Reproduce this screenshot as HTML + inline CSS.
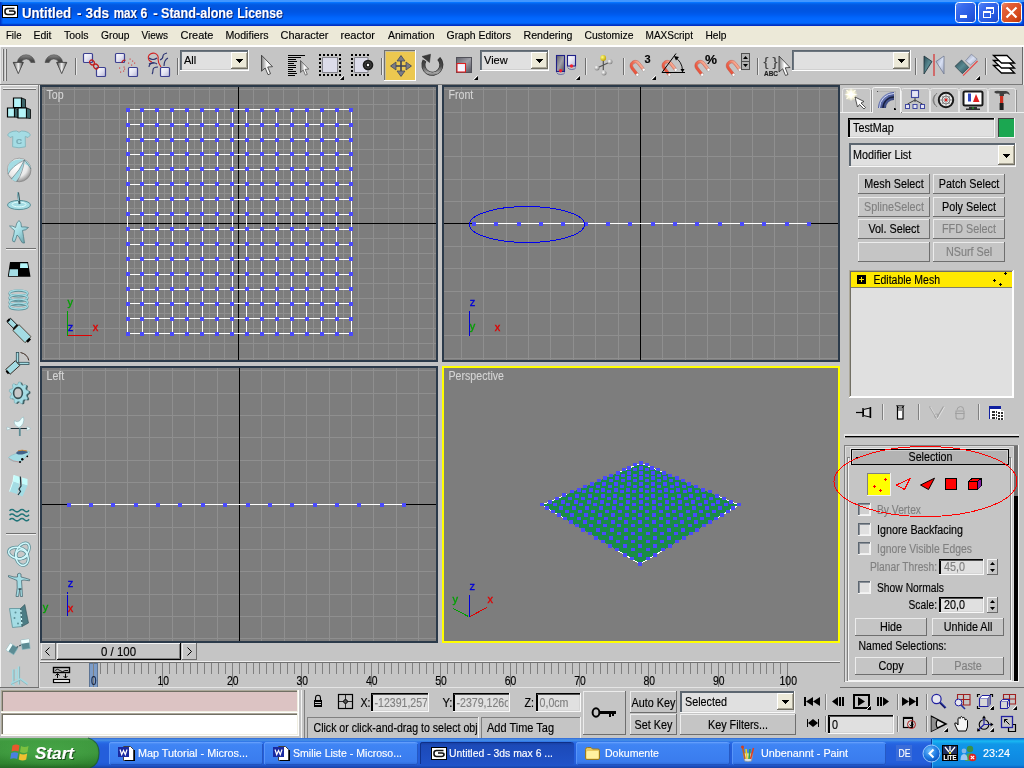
<!DOCTYPE html>
<html><head><meta charset="utf-8"><title>Untitled - 3ds max 6</title>
<style>
html,body{margin:0;padding:0}
body{width:1024px;height:768px;position:relative;overflow:hidden;background:#c5c5c5;font-family:"Liberation Sans",sans-serif;font-size:11px;color:#000}
.a{position:absolute}
.t{position:absolute;white-space:nowrap;line-height:1}
svg{position:absolute;overflow:visible;will-change:transform}
</style></head><body>

<div class="a" id="titlebar" style="left:0;top:0;width:1024px;height:26px;background:linear-gradient(to bottom,#4196ff 0,#4196ff 1.6px,#0574ff 2.5px,#0465ee 3.5px,#0258e0 5px,#0054e0 9px,#0056e4 12px,#005cf0 15px,#0064fa 17px,#0368ff 19px,#0368ff 22.5px,#0060f0 23.5px,#0042d0 24.5px,#002fc5 25.5px)"></div><div class="a" id="menubar" style="left:0;top:26px;width:1024px;height:19px;background:#ece9d8"></div><div class="a" style="left:0;top:45px;width:1024px;height:2px;background:#ffffff"></div><svg class="a" style="left:0;top:0" width="1024" height="768" viewBox="0 0 1024 768" font-family="Liberation Sans" ><defs>
<linearGradient id="gbtn" x1="0" y1="0" x2="1" y2="1"><stop offset="0" stop-color="#5a8cf8"/><stop offset="0.25" stop-color="#3a6cee"/><stop offset="0.7" stop-color="#2458e0"/><stop offset="1" stop-color="#1c46c8"/></linearGradient>
<linearGradient id="gclose" x1="0" y1="0" x2="1" y2="1"><stop offset="0" stop-color="#ee9070"/><stop offset="0.25" stop-color="#e2603a"/><stop offset="0.7" stop-color="#d64a1c"/><stop offset="1" stop-color="#b83208"/></linearGradient>
<linearGradient id="gleft" x1="0" y1="0" x2="1" y2="0"><stop offset="0" stop-color="#0030c0"/><stop offset="1" stop-color="#0030c0" stop-opacity="0"/></linearGradient>
</defs><rect x="0" y="2" width="3" height="24" fill="url(#gleft)" /><rect x="1021" y="2" width="3" height="24" fill="url(#gleft)" transform="translate(2045,0) scale(-1,1)"/><rect x="2" y="5" width="16" height="13" fill="#000" shape-rendering="crispEdges"/><rect x="3" y="6" width="14" height="11" fill="#fff" shape-rendering="crispEdges"/><path d="M14.5 8.5 H7.5 Q5 8.5 5 11 V12 Q5 14.5 7.5 14.5 H12.5 Q15 14.5 15 12.5 Q15 11 13 11 H9" fill="none" stroke="#111" stroke-width="1.6"/><text x="23" y="19" font-size="14" fill="#0a1e6e" stroke="#0a1e6e" stroke-width="0.15" font-weight="bold" textLength="49.2" lengthAdjust="spacingAndGlyphs" >Untitled</text><text x="78" y="19" font-size="14" fill="#0a1e6e" stroke="#0a1e6e" stroke-width="0.15" font-weight="bold" textLength="4.5" lengthAdjust="spacingAndGlyphs" >-</text><text x="86.6" y="19" font-size="14" fill="#0a1e6e" stroke="#0a1e6e" stroke-width="0.15" font-weight="bold" textLength="23.4" lengthAdjust="spacingAndGlyphs" >3ds</text><text x="114.7" y="19" font-size="14" fill="#0a1e6e" stroke="#0a1e6e" stroke-width="0.15" font-weight="bold" textLength="23.3" lengthAdjust="spacingAndGlyphs" >max</text><text x="141.6" y="19" font-size="14" fill="#0a1e6e" stroke="#0a1e6e" stroke-width="0.15" font-weight="bold" textLength="6.8" lengthAdjust="spacingAndGlyphs" >6</text><text x="154.2" y="19" font-size="14" fill="#0a1e6e" stroke="#0a1e6e" stroke-width="0.15" font-weight="bold" textLength="4.5" lengthAdjust="spacingAndGlyphs" >-</text><text x="162" y="19" font-size="14" fill="#0a1e6e" stroke="#0a1e6e" stroke-width="0.15" font-weight="bold" textLength="72" lengthAdjust="spacingAndGlyphs" >Stand-alone</text><text x="238.3" y="19" font-size="14" fill="#0a1e6e" stroke="#0a1e6e" stroke-width="0.15" font-weight="bold" textLength="45.4" lengthAdjust="spacingAndGlyphs" >License</text><text x="22" y="18" font-size="14" fill="#fff" stroke="#fff" stroke-width="0.15" font-weight="bold" textLength="49.2" lengthAdjust="spacingAndGlyphs" >Untitled</text><text x="77" y="18" font-size="14" fill="#fff" stroke="#fff" stroke-width="0.15" font-weight="bold" textLength="4.5" lengthAdjust="spacingAndGlyphs" >-</text><text x="85.6" y="18" font-size="14" fill="#fff" stroke="#fff" stroke-width="0.15" font-weight="bold" textLength="23.4" lengthAdjust="spacingAndGlyphs" >3ds</text><text x="113.7" y="18" font-size="14" fill="#fff" stroke="#fff" stroke-width="0.15" font-weight="bold" textLength="23.3" lengthAdjust="spacingAndGlyphs" >max</text><text x="140.6" y="18" font-size="14" fill="#fff" stroke="#fff" stroke-width="0.15" font-weight="bold" textLength="6.8" lengthAdjust="spacingAndGlyphs" >6</text><text x="153.2" y="18" font-size="14" fill="#fff" stroke="#fff" stroke-width="0.15" font-weight="bold" textLength="4.5" lengthAdjust="spacingAndGlyphs" >-</text><text x="161" y="18" font-size="14" fill="#fff" stroke="#fff" stroke-width="0.15" font-weight="bold" textLength="72" lengthAdjust="spacingAndGlyphs" >Stand-alone</text><text x="237.3" y="18" font-size="14" fill="#fff" stroke="#fff" stroke-width="0.15" font-weight="bold" textLength="45.4" lengthAdjust="spacingAndGlyphs" >License</text><rect x="955.5" y="2.5" width="20" height="20" rx="3" ry="3" fill="url(#gbtn)" stroke="#ffffff" stroke-width="1"/><rect x="960" y="15" width="7" height="3" fill="#fff" shape-rendering="crispEdges"/><rect x="978.5" y="2.5" width="20" height="20" rx="3" ry="3" fill="url(#gbtn)" stroke="#ffffff" stroke-width="1"/><path d="M986.5 9.5 V7.5 H993.5 V13.5 H991.5" fill="none" stroke="#fff" stroke-width="1"/><rect x="986" y="7" width="8" height="2" fill="#fff" shape-rendering="crispEdges"/><rect x="983.5" y="11.5" width="7" height="6" fill="none" stroke="#fff" stroke-width="1"/><rect x="983" y="11" width="8" height="2" fill="#fff" shape-rendering="crispEdges"/><rect x="1001.5" y="2.5" width="20" height="20" rx="3" ry="3" fill="url(#gclose)" stroke="#ffffff" stroke-width="1"/><path d="M1006.5 7.5 L1016.5 17.5 M1016.5 7.5 L1006.5 17.5" stroke="#fff" stroke-width="2.2" stroke-linecap="butt" fill="none"/><text x="6" y="39" font-size="11" fill="#000" stroke="#000" stroke-width="0.15" textLength="15.5" lengthAdjust="spacingAndGlyphs" >File</text><text x="33.5" y="39" font-size="11" fill="#000" stroke="#000" stroke-width="0.15" textLength="18.0" lengthAdjust="spacingAndGlyphs" >Edit</text><text x="64" y="39" font-size="11" fill="#000" stroke="#000" stroke-width="0.15" textLength="24.5" lengthAdjust="spacingAndGlyphs" >Tools</text><text x="101" y="39" font-size="11" fill="#000" stroke="#000" stroke-width="0.15" textLength="28.5" lengthAdjust="spacingAndGlyphs" >Group</text><text x="141.5" y="39" font-size="11" fill="#000" stroke="#000" stroke-width="0.15" textLength="26.5" lengthAdjust="spacingAndGlyphs" >Views</text><text x="180.5" y="39" font-size="11" fill="#000" stroke="#000" stroke-width="0.15" textLength="33.0" lengthAdjust="spacingAndGlyphs" >Create</text><text x="225.5" y="39" font-size="11" fill="#000" stroke="#000" stroke-width="0.15" textLength="43.0" lengthAdjust="spacingAndGlyphs" >Modifiers</text><text x="280.5" y="39" font-size="11" fill="#000" stroke="#000" stroke-width="0.15" textLength="48.0" lengthAdjust="spacingAndGlyphs" >Character</text><text x="340.5" y="39" font-size="11" fill="#000" stroke="#000" stroke-width="0.15" textLength="34.5" lengthAdjust="spacingAndGlyphs" >reactor</text><text x="388" y="39" font-size="11" fill="#000" stroke="#000" stroke-width="0.15" textLength="46.5" lengthAdjust="spacingAndGlyphs" >Animation</text><text x="446.5" y="39" font-size="11" fill="#000" stroke="#000" stroke-width="0.15" textLength="64.5" lengthAdjust="spacingAndGlyphs" >Graph Editors</text><text x="523.5" y="39" font-size="11" fill="#000" stroke="#000" stroke-width="0.15" textLength="49.0" lengthAdjust="spacingAndGlyphs" >Rendering</text><text x="584.5" y="39" font-size="11" fill="#000" stroke="#000" stroke-width="0.15" textLength="49.0" lengthAdjust="spacingAndGlyphs" >Customize</text><text x="645.5" y="39" font-size="11" fill="#000" stroke="#000" stroke-width="0.15" textLength="47.5" lengthAdjust="spacingAndGlyphs" >MAXScript</text><text x="705.5" y="39" font-size="11" fill="#000" stroke="#000" stroke-width="0.15" textLength="21.0" lengthAdjust="spacingAndGlyphs" >Help</text></svg>
<svg class="a" style="left:0;top:0" width="1024" height="768" viewBox="0 0 1024 768" font-family="Liberation Sans" ><defs>
<linearGradient id="gbox" x1="0" y1="0" x2="1" y2="1"><stop offset="0" stop-color="#ffffff"/><stop offset="0.5" stop-color="#e4e4f2"/><stop offset="1" stop-color="#b4b4d4"/></linearGradient>
<linearGradient id="gmag" x1="0" y1="0" x2="1" y2="0"><stop offset="0" stop-color="#e85038"/><stop offset="0.55" stop-color="#f07058"/><stop offset="1" stop-color="#f8b8a0"/></linearGradient>
<linearGradient id="gcur" x1="0" y1="0" x2="1" y2="0"><stop offset="0" stop-color="#808080"/><stop offset="0.5" stop-color="#ffffff"/><stop offset="1" stop-color="#e0e0e0"/></linearGradient>
<linearGradient id="garr" x1="0" y1="0" x2="0" y2="1"><stop offset="0" stop-color="#8a8a8a"/><stop offset="0.3" stop-color="#4a4a4a"/><stop offset="1" stop-color="#303030"/></linearGradient>
<linearGradient id="gahead" x1="0" y1="0" x2="1" y2="0"><stop offset="0" stop-color="#606060"/><stop offset="0.5" stop-color="#f0f0f0"/><stop offset="1" stop-color="#404040"/></linearGradient>
<linearGradient id="gteal" x1="0" y1="0" x2="1" y2="1"><stop offset="0" stop-color="#2a4a55"/><stop offset="0.5" stop-color="#5a8a92"/><stop offset="1" stop-color="#2a4a55"/></linearGradient>
<linearGradient id="glav" x1="0" y1="0" x2="1" y2="1"><stop offset="0" stop-color="#8890a8"/><stop offset="0.5" stop-color="#d8e0f4"/><stop offset="1" stop-color="#a0a8c0"/></linearGradient>
<linearGradient id="gdk" x1="0" y1="0" x2="1" y2="1"><stop offset="0" stop-color="#60606a"/><stop offset="0.5" stop-color="#a0a0a8"/><stop offset="1" stop-color="#50505a"/></linearGradient>
<linearGradient id="grot" gradientUnits="userSpaceOnUse" x1="432" y1="54" x2="432" y2="76"><stop offset="0" stop-color="#303030"/><stop offset="0.55" stop-color="#484848"/><stop offset="0.85" stop-color="#a8a8a8"/><stop offset="1" stop-color="#606060"/></linearGradient><radialGradient id="gball" cx="0.35" cy="0.35" r="0.7"><stop offset="0" stop-color="#ffffff"/><stop offset="1" stop-color="#808080"/></radialGradient>
<radialGradient id="gyball" cx="0.35" cy="0.35" r="0.7"><stop offset="0" stop-color="#ffff80"/><stop offset="1" stop-color="#c0a000"/></radialGradient>
</defs><rect x="0" y="47" width="1" height="38" fill="#e8e8e8" shape-rendering="crispEdges"/><rect x="1022" y="47" width="1" height="38" fill="#6a6a6a" shape-rendering="crispEdges"/><rect x="1023" y="47" width="1" height="38" fill="#e8e8e8" shape-rendering="crispEdges"/><rect x="0" y="84" width="1023" height="1" fill="#7a7a7a" shape-rendering="crispEdges"/><rect x="3" y="49" width="1" height="32" fill="#6e6e6e" shape-rendering="crispEdges"/><rect x="6" y="49" width="1" height="32" fill="#6e6e6e" shape-rendering="crispEdges"/><rect x="2" y="49" width="1" height="32" fill="#e0e0e0" shape-rendering="crispEdges"/><rect x="5" y="49" width="1" height="32" fill="#e0e0e0" shape-rendering="crispEdges"/><path d="M35 62.5 A9 9 0 0 0 17.2 62.3 L13.2 62.3 L18.3 73.6 L23.4 62.3 L21.6 62.3 A4.8 4.8 0 0 1 30.8 62.5 Z" fill="url(#garr)" stroke="#404040" stroke-width="0.5"/><path d="M13.4 62.5 L18.3 73.4 L23.2 62.5 Z" fill="url(#gahead)" stroke="#383838" stroke-width="0.6"/><g transform="translate(80,0) scale(-1,1)"><path d="M35 62.5 A9 9 0 0 0 17.2 62.3 L13.2 62.3 L18.3 73.6 L23.4 62.3 L21.6 62.3 A4.8 4.8 0 0 1 30.8 62.5 Z" fill="url(#garr)" stroke="#404040" stroke-width="0.5"/><path d="M13.4 62.5 L18.3 73.4 L23.2 62.5 Z" fill="url(#gahead)" stroke="#383838" stroke-width="0.6"/></g><rect x="75" y="58" width="1" height="17" fill="#6e6e6e" shape-rendering="crispEdges"/><rect x="76" y="58" width="1" height="17" fill="#e8e8e8" shape-rendering="crispEdges"/><rect x="83.5" y="53.5" width="9" height="9" rx="1" fill="url(#gbox)" stroke="#3c4090" stroke-width="1.2"/><rect x="96.5" y="67.5" width="9" height="9" rx="1" fill="url(#gbox)" stroke="#3c4090" stroke-width="1.2"/><ellipse cx="92" cy="62.5" rx="2.6" ry="2.1" transform="rotate(45 92 62.5)" fill="none" stroke="#c02020" stroke-width="1.2"/><ellipse cx="96" cy="66.5" rx="2.6" ry="2.1" transform="rotate(45 96 66.5)" fill="none" stroke="#c02020" stroke-width="1.2"/><rect x="115.5" y="53.5" width="9" height="9" rx="1" fill="url(#gbox)" stroke="#3c4090" stroke-width="1.2"/><rect x="128.5" y="67.5" width="9" height="9" rx="1" fill="url(#gbox)" stroke="#3c4090" stroke-width="1.2"/><path d="M122 63 A2.4 2.4 0 0 1 125.5 60.5" fill="none" stroke="#c02020" stroke-width="1.3"/><rect x="129.5" y="58.5" width="1.2" height="1.2" fill="#d05050" /><rect x="132" y="60.5" width="1.2" height="1.2" fill="#d05050" /><rect x="128" y="62.5" width="1.2" height="1.2" fill="#d05050" /><rect x="134" y="62.5" width="1.2" height="1.2" fill="#d05050" /><rect x="131" y="64.5" width="1.2" height="1.2" fill="#d05050" /><rect x="119" y="67.5" width="1.2" height="1.2" fill="#d05050" /><rect x="123.5" y="66.5" width="1.2" height="1.2" fill="#d05050" /><rect x="124" y="68.5" width="1.2" height="1.2" fill="#d05050" /><rect x="120" y="71.5" width="1.2" height="1.2" fill="#d05050" /><rect x="123" y="70.5" width="1.2" height="1.2" fill="#d05050" /><path d="M149 58 q4 3 8 0 M149 64 q4 -3 8 0 M149 67 q0 -4 6 -4 M152 74 q1 -1 1 -4 q0 -3 5 -3 M160 60 q3 -1 3 -4 q0 -2 4 -3 M164 66 q0 -6 4 -8" fill="none" stroke="#283070" stroke-width="1.1"/><path d="M152 62 A5 4.5 0 1 1 158 59 Q158 63 161 67" fill="none" stroke="#d02020" stroke-width="1.1"/><rect x="160.5" y="67.5" width="9" height="9" rx="1" fill="url(#gbox)" stroke="#3c4090" stroke-width="1.2"/><rect x="177" y="58" width="1" height="17" fill="#6e6e6e" shape-rendering="crispEdges"/><rect x="178" y="58" width="1" height="17" fill="#e8e8e8" shape-rendering="crispEdges"/><rect x="180" y="50" width="69" height="21" fill="#ffffff" shape-rendering="crispEdges"/><rect x="180" y="50" width="68" height="20" fill="#5c6670" shape-rendering="crispEdges"/><rect x="182" y="52" width="66" height="18" fill="#e0e0e0" shape-rendering="crispEdges"/><rect x="181" y="51" width="67" height="1" fill="#6c757e" shape-rendering="crispEdges"/><rect x="181" y="51" width="1" height="19" fill="#6c757e" shape-rendering="crispEdges"/><rect x="182" y="69" width="66" height="1" fill="#d0d0d0" shape-rendering="crispEdges"/><rect x="231" y="52" width="17" height="17" fill="#ece9d8" shape-rendering="crispEdges"/><rect x="231" y="52" width="17" height="1" fill="#ffffff" shape-rendering="crispEdges"/><rect x="231" y="52" width="1" height="17" fill="#ffffff" shape-rendering="crispEdges"/><rect x="231" y="68" width="17" height="1" fill="#716f64" shape-rendering="crispEdges"/><rect x="247" y="52" width="1" height="17" fill="#716f64" shape-rendering="crispEdges"/><rect x="232" y="67" width="15" height="1" fill="#aca899" shape-rendering="crispEdges"/><rect x="246" y="53" width="1" height="15" fill="#aca899" shape-rendering="crispEdges"/><rect x="236" y="59" width="7" height="1" fill="#000" shape-rendering="crispEdges"/><rect x="237" y="60" width="5" height="1" fill="#000" shape-rendering="crispEdges"/><rect x="238" y="61" width="3" height="1" fill="#000" shape-rendering="crispEdges"/><rect x="239" y="62" width="1" height="1" fill="#000" shape-rendering="crispEdges"/><text x="184" y="64" font-size="11" fill="#000" stroke="#000" stroke-width="0.15" >All</text><path transform="translate(261.5,55.2) scale(1.0)" d="M0 0 L0 16 L3.7 12.8 L6.5 19.5 L9 18.5 L6.2 11.8 L11 11.5 Z" fill="url(#gcur)" stroke="#303030" stroke-width="0.8" stroke-linejoin="round"/><rect x="288" y="55" width="17" height="1" fill="#000" shape-rendering="crispEdges"/><rect x="288" y="57" width="13" height="1" fill="#000" shape-rendering="crispEdges"/><rect x="288" y="59" width="8" height="1" fill="#000" shape-rendering="crispEdges"/><rect x="288" y="61" width="9" height="1" fill="#000" shape-rendering="crispEdges"/><rect x="288" y="63" width="6" height="1" fill="#000" shape-rendering="crispEdges"/><rect x="288" y="65" width="8" height="1" fill="#000" shape-rendering="crispEdges"/><rect x="288" y="67" width="8" height="1" fill="#000" shape-rendering="crispEdges"/><rect x="288" y="69" width="5" height="1" fill="#000" shape-rendering="crispEdges"/><rect x="288" y="71" width="8" height="1" fill="#000" shape-rendering="crispEdges"/><rect x="288" y="73" width="9" height="1" fill="#000" shape-rendering="crispEdges"/><rect x="288" y="75" width="7" height="1" fill="#000" shape-rendering="crispEdges"/><path transform="translate(300.5,60.5) scale(0.75)" d="M0 0 L0 16 L3.7 12.8 L6.5 19.5 L9 18.5 L6.2 11.8 L11 11.5 Z" fill="url(#gcur)" stroke="#303030" stroke-width="0.8" stroke-linejoin="round"/><rect x="319" y="54" width="2" height="2" fill="#000" shape-rendering="crispEdges"/><rect x="319" y="74" width="2" height="2" fill="#000" shape-rendering="crispEdges"/><rect x="319" y="54" width="2" height="2" fill="#000" shape-rendering="crispEdges"/><rect x="339" y="54" width="2" height="2" fill="#000" shape-rendering="crispEdges"/><rect x="323" y="54" width="2" height="2" fill="#000" shape-rendering="crispEdges"/><rect x="323" y="74" width="2" height="2" fill="#000" shape-rendering="crispEdges"/><rect x="319" y="58" width="2" height="2" fill="#000" shape-rendering="crispEdges"/><rect x="339" y="58" width="2" height="2" fill="#000" shape-rendering="crispEdges"/><rect x="327" y="54" width="2" height="2" fill="#000" shape-rendering="crispEdges"/><rect x="327" y="74" width="2" height="2" fill="#000" shape-rendering="crispEdges"/><rect x="319" y="62" width="2" height="2" fill="#000" shape-rendering="crispEdges"/><rect x="339" y="62" width="2" height="2" fill="#000" shape-rendering="crispEdges"/><rect x="331" y="54" width="2" height="2" fill="#000" shape-rendering="crispEdges"/><rect x="331" y="74" width="2" height="2" fill="#000" shape-rendering="crispEdges"/><rect x="319" y="66" width="2" height="2" fill="#000" shape-rendering="crispEdges"/><rect x="339" y="66" width="2" height="2" fill="#000" shape-rendering="crispEdges"/><rect x="335" y="54" width="2" height="2" fill="#000" shape-rendering="crispEdges"/><rect x="335" y="74" width="2" height="2" fill="#000" shape-rendering="crispEdges"/><rect x="319" y="70" width="2" height="2" fill="#000" shape-rendering="crispEdges"/><rect x="339" y="70" width="2" height="2" fill="#000" shape-rendering="crispEdges"/><rect x="339" y="54" width="2" height="2" fill="#000" shape-rendering="crispEdges"/><rect x="339" y="74" width="2" height="2" fill="#000" shape-rendering="crispEdges"/><rect x="319" y="74" width="2" height="2" fill="#000" shape-rendering="crispEdges"/><rect x="339" y="74" width="2" height="2" fill="#000" shape-rendering="crispEdges"/><rect x="322.5" y="57.5" width="15" height="15" fill="#dcdcea" stroke="#888890" stroke-width="1"/><path d="M344 76 V80 H340 Z" fill="#000"/><path d="M339.5 79.5 L343.5 75.5" stroke="#fff" stroke-width="1"/><rect x="351" y="54" width="2" height="2" fill="#000" shape-rendering="crispEdges"/><rect x="351" y="74" width="2" height="2" fill="#000" shape-rendering="crispEdges"/><rect x="355" y="54" width="2" height="2" fill="#000" shape-rendering="crispEdges"/><rect x="355" y="74" width="2" height="2" fill="#000" shape-rendering="crispEdges"/><rect x="359" y="54" width="2" height="2" fill="#000" shape-rendering="crispEdges"/><rect x="359" y="74" width="2" height="2" fill="#000" shape-rendering="crispEdges"/><rect x="363" y="54" width="2" height="2" fill="#000" shape-rendering="crispEdges"/><rect x="363" y="74" width="2" height="2" fill="#000" shape-rendering="crispEdges"/><rect x="367" y="54" width="2" height="2" fill="#000" shape-rendering="crispEdges"/><rect x="367" y="74" width="2" height="2" fill="#000" shape-rendering="crispEdges"/><rect x="351" y="54" width="2" height="2" fill="#000" shape-rendering="crispEdges"/><rect x="351" y="58" width="2" height="2" fill="#000" shape-rendering="crispEdges"/><rect x="351" y="62" width="2" height="2" fill="#000" shape-rendering="crispEdges"/><rect x="351" y="66" width="2" height="2" fill="#000" shape-rendering="crispEdges"/><rect x="351" y="70" width="2" height="2" fill="#000" shape-rendering="crispEdges"/><rect x="351" y="74" width="2" height="2" fill="#000" shape-rendering="crispEdges"/><path d="M354.5 57.5 H368 V72.5 H354.5 Z" fill="#dcdcea" stroke="#888890" stroke-width="1"/><circle cx="368" cy="65" r="5.3" fill="#1c1c1c"/><circle cx="368" cy="65" r="3.2" fill="none" stroke="#505050" stroke-width="0.8"/><circle cx="368" cy="65" r="1.2" fill="#fff"/><rect x="381" y="58" width="1" height="17" fill="#6e6e6e" shape-rendering="crispEdges"/><rect x="382" y="58" width="1" height="17" fill="#e8e8e8" shape-rendering="crispEdges"/><rect x="384" y="50" width="32" height="31" fill="#ffffff" shape-rendering="crispEdges"/><rect x="384" y="50" width="31" height="30" fill="#707070" shape-rendering="crispEdges"/><rect x="385" y="51" width="30" height="29" fill="#ecc850" shape-rendering="crispEdges"/><rect x="385" y="51" width="30" height="1" fill="#c8c0a0" shape-rendering="crispEdges"/><rect x="385" y="51" width="1" height="29" fill="#c8c0a0" shape-rendering="crispEdges"/><path d="M401 56 V76 M391 66 H411" stroke="#3a4258" stroke-width="1.6"/><path d="M401 55.5 L397 61 H405 Z M401 76.5 L397 71 H405 Z M390.5 66 L396 62 V70 Z M411.5 66 L406 62 V70 Z" fill="#7c7c84" stroke="#3a4258" stroke-width="0.7"/><path d="M438.8 58.5 A9 9 0 1 1 424.5 60.5" fill="none" stroke="#2c2c2c" stroke-width="4"/><path d="M438.8 58.5 A9 9 0 1 1 424.5 60.5" fill="none" stroke="url(#grot)" stroke-width="2.8"/><path d="M422 56.5 L430.5 54.2 L429.5 62.5 Z" fill="#3a3a3a" stroke="#2a2a2a" stroke-width="0.5"/><rect x="456.5" y="57.5" width="15" height="15" fill="url(#gdk)" stroke="#505058" stroke-width="1"/><rect x="457" y="63.5" width="8.5" height="8.5" fill="#f4f4ff" stroke="#e02020" stroke-width="1.1"/><path d="M478 76 V80 H474 Z" fill="#000"/><path d="M473.5 79.5 L477.5 75.5" stroke="#fff" stroke-width="1"/><rect x="480" y="50" width="69" height="21" fill="#ffffff" shape-rendering="crispEdges"/><rect x="480" y="50" width="68" height="20" fill="#5c6670" shape-rendering="crispEdges"/><rect x="482" y="52" width="66" height="18" fill="#e0e0e0" shape-rendering="crispEdges"/><rect x="481" y="51" width="67" height="1" fill="#6c757e" shape-rendering="crispEdges"/><rect x="481" y="51" width="1" height="19" fill="#6c757e" shape-rendering="crispEdges"/><rect x="482" y="69" width="66" height="1" fill="#d0d0d0" shape-rendering="crispEdges"/><rect x="531" y="52" width="17" height="17" fill="#ece9d8" shape-rendering="crispEdges"/><rect x="531" y="52" width="17" height="1" fill="#ffffff" shape-rendering="crispEdges"/><rect x="531" y="52" width="1" height="17" fill="#ffffff" shape-rendering="crispEdges"/><rect x="531" y="68" width="17" height="1" fill="#716f64" shape-rendering="crispEdges"/><rect x="547" y="52" width="1" height="17" fill="#716f64" shape-rendering="crispEdges"/><rect x="532" y="67" width="15" height="1" fill="#aca899" shape-rendering="crispEdges"/><rect x="546" y="53" width="1" height="15" fill="#aca899" shape-rendering="crispEdges"/><rect x="536" y="59" width="7" height="1" fill="#000" shape-rendering="crispEdges"/><rect x="537" y="60" width="5" height="1" fill="#000" shape-rendering="crispEdges"/><rect x="538" y="61" width="3" height="1" fill="#000" shape-rendering="crispEdges"/><rect x="539" y="62" width="1" height="1" fill="#000" shape-rendering="crispEdges"/><text x="484" y="64" font-size="11" fill="#000" stroke="#000" stroke-width="0.15" >View</text><rect x="556.5" y="55.5" width="8" height="16" fill="url(#gdk)" stroke="#202088" stroke-width="1.1"/><path d="M556.5 72.5 A4.5 3 0 0 0 565 72.5" fill="none" stroke="#5058a0" stroke-width="0.8"/><circle cx="560.6" cy="70.8" r="1.7" fill="#f02030"/><rect x="567.5" y="55.5" width="8" height="10.5" fill="url(#gbox)" stroke="#202088" stroke-width="1.1"/><path d="M567.5 67.5 A4.5 3 0 0 0 576 67.5" fill="none" stroke="#5058a0" stroke-width="0.8"/><circle cx="571.5" cy="66" r="1.7" fill="#f02030"/><path d="M580 76 V80 H576 Z" fill="#000"/><path d="M575.5 79.5 L579.5 75.5" stroke="#fff" stroke-width="1"/><rect x="585" y="58" width="1" height="17" fill="#6e6e6e" shape-rendering="crispEdges"/><rect x="586" y="58" width="1" height="17" fill="#e8e8e8" shape-rendering="crispEdges"/><path d="M603.3 58 V70 M597 68 L610 62" stroke="#555" stroke-width="1.2"/><circle cx="603.2" cy="58" r="2.9" fill="url(#gyball)"/><circle cx="610" cy="61.8" r="2.5" fill="url(#gball)"/><circle cx="597" cy="67.9" r="2.5" fill="url(#gball)"/><circle cx="604" cy="73" r="2.5" fill="url(#gball)"/><rect x="623" y="58" width="1" height="17" fill="#6e6e6e" shape-rendering="crispEdges"/><rect x="624" y="58" width="1" height="17" fill="#e8e8e8" shape-rendering="crispEdges"/><g transform="translate(636,66.5) rotate(-38)"><path d="M-5.4 7.5 V-1 A5.4 5.4 0 0 1 5.4 -1 V7.5 H2.7 V-1 A2.7 2.7 0 0 0 -2.7 -1 V7.5 Z" fill="url(#gmag)" stroke="#c04838" stroke-width="0.4"/><rect x="-5.4" y="6.2" width="2.7" height="2.4" fill="#fff" stroke="#999" stroke-width="0.4"/><rect x="2.7" y="6.2" width="2.7" height="2.4" fill="#fff" stroke="#999" stroke-width="0.4"/></g><text x="644.5" y="62.5" font-size="11" fill="#000" stroke="#000" stroke-width="0.15" font-weight="bold" >3</text><path d="M656 76 V80 H652 Z" fill="#000"/><path d="M651.5 79.5 L655.5 75.5" stroke="#fff" stroke-width="1"/><g transform="translate(668,66.5) rotate(-38)"><path d="M-5.4 7.5 V-1 A5.4 5.4 0 0 1 5.4 -1 V7.5 H2.7 V-1 A2.7 2.7 0 0 0 -2.7 -1 V7.5 Z" fill="url(#gmag)" stroke="#c04838" stroke-width="0.4"/><rect x="-5.4" y="6.2" width="2.7" height="2.4" fill="#fff" stroke="#999" stroke-width="0.4"/><rect x="2.7" y="6.2" width="2.7" height="2.4" fill="#fff" stroke="#999" stroke-width="0.4"/></g><path d="M662 72.5 H685 M662 72.5 L676 53.5" stroke="#000" stroke-width="1" fill="none"/><path d="M675 57 Q682 62 682.5 70" stroke="#000" stroke-width="0.9" fill="none"/><path d="M674 56 L679 57 L676 60.5 Z M680.5 69 L684.5 69 L682.5 72.5 Z" fill="#000"/><g transform="translate(700.8,66.5) rotate(-38)"><path d="M-5.4 7.5 V-1 A5.4 5.4 0 0 1 5.4 -1 V7.5 H2.7 V-1 A2.7 2.7 0 0 0 -2.7 -1 V7.5 Z" fill="url(#gmag)" stroke="#c04838" stroke-width="0.4"/><rect x="-5.4" y="6.2" width="2.7" height="2.4" fill="#fff" stroke="#999" stroke-width="0.4"/><rect x="2.7" y="6.2" width="2.7" height="2.4" fill="#fff" stroke="#999" stroke-width="0.4"/></g><text x="705" y="63.5" font-size="12" fill="#000" stroke="#000" stroke-width="0.15" font-weight="bold" textLength="12" lengthAdjust="spacingAndGlyphs" >%</text><g transform="translate(732.2,66.5) rotate(-38)"><path d="M-5.4 7.5 V-1 A5.4 5.4 0 0 1 5.4 -1 V7.5 H2.7 V-1 A2.7 2.7 0 0 0 -2.7 -1 V7.5 Z" fill="url(#gmag)" stroke="#c04838" stroke-width="0.4"/><rect x="-5.4" y="6.2" width="2.7" height="2.4" fill="#fff" stroke="#999" stroke-width="0.4"/><rect x="2.7" y="6.2" width="2.7" height="2.4" fill="#fff" stroke="#999" stroke-width="0.4"/></g><rect x="741" y="53" width="9" height="17" fill="#505050" shape-rendering="crispEdges"/><rect x="742" y="54" width="7" height="7" fill="#b4b4b4" shape-rendering="crispEdges"/><rect x="742" y="62" width="7" height="7" fill="#b4b4b4" shape-rendering="crispEdges"/><path d="M743 59 h5 l-2.5 -3 z M743 64 h5 l-2.5 3 z" fill="#000"/><rect x="757" y="58" width="1" height="17" fill="#6e6e6e" shape-rendering="crispEdges"/><rect x="758" y="58" width="1" height="17" fill="#e8e8e8" shape-rendering="crispEdges"/><text x="763.5" y="66" font-size="13" fill="#404040" stroke="#404040" stroke-width="0.15" textLength="14" lengthAdjust="spacingAndGlyphs" >{ }</text><text x="764" y="76" font-size="6.5" fill="#202020" stroke="#202020" stroke-width="0.15" font-weight="bold" textLength="14" lengthAdjust="spacingAndGlyphs" >ABC</text><path transform="translate(779,56) scale(1.0)" d="M0 0 L0 16 L3.7 12.8 L6.5 19.5 L9 18.5 L6.2 11.8 L11 11.5 Z" fill="url(#gcur)" stroke="#303030" stroke-width="0.8" stroke-linejoin="round"/><rect x="792" y="50" width="119" height="21" fill="#ffffff" shape-rendering="crispEdges"/><rect x="792" y="50" width="118" height="20" fill="#5c6670" shape-rendering="crispEdges"/><rect x="794" y="52" width="116" height="18" fill="#e0e0e0" shape-rendering="crispEdges"/><rect x="793" y="51" width="117" height="1" fill="#6c757e" shape-rendering="crispEdges"/><rect x="793" y="51" width="1" height="19" fill="#6c757e" shape-rendering="crispEdges"/><rect x="794" y="69" width="116" height="1" fill="#d0d0d0" shape-rendering="crispEdges"/><rect x="893" y="52" width="17" height="17" fill="#ece9d8" shape-rendering="crispEdges"/><rect x="893" y="52" width="17" height="1" fill="#ffffff" shape-rendering="crispEdges"/><rect x="893" y="52" width="1" height="17" fill="#ffffff" shape-rendering="crispEdges"/><rect x="893" y="68" width="17" height="1" fill="#716f64" shape-rendering="crispEdges"/><rect x="909" y="52" width="1" height="17" fill="#716f64" shape-rendering="crispEdges"/><rect x="894" y="67" width="15" height="1" fill="#aca899" shape-rendering="crispEdges"/><rect x="908" y="53" width="1" height="15" fill="#aca899" shape-rendering="crispEdges"/><rect x="898" y="59" width="7" height="1" fill="#000" shape-rendering="crispEdges"/><rect x="899" y="60" width="5" height="1" fill="#000" shape-rendering="crispEdges"/><rect x="900" y="61" width="3" height="1" fill="#000" shape-rendering="crispEdges"/><rect x="901" y="62" width="1" height="1" fill="#000" shape-rendering="crispEdges"/><rect x="915" y="58" width="1" height="17" fill="#6e6e6e" shape-rendering="crispEdges"/><rect x="916" y="58" width="1" height="17" fill="#e8e8e8" shape-rendering="crispEdges"/><path d="M924 56 V74 L932 61.5 Z" fill="url(#gteal)" stroke="#1c3038" stroke-width="0.8"/><rect x="933" y="54" width="2" height="22" fill="#d06a6a" shape-rendering="crispEdges"/><path d="M944 56 V74 L936 61.5 Z" fill="url(#glav)" stroke="#707890" stroke-width="0.8"/><path d="M955 66.3 L961.6 60 L968.8 67.4 L962.4 73.7 Z" fill="url(#gteal)" stroke="#1c3038" stroke-width="0.6"/><path d="M965.5 60.8 L971.3 54.2 L977.2 59.2 L970.6 65 Z" fill="url(#glav)" stroke="#707890" stroke-width="0.6"/><path d="M963.1 75.6 L977.6 61" stroke="#e84848" stroke-width="1.2"/><path d="M980 76 V80 H976 Z" fill="#000"/><path d="M975.5 79.5 L979.5 75.5" stroke="#fff" stroke-width="1"/><rect x="985" y="58" width="1" height="17" fill="#6e6e6e" shape-rendering="crispEdges"/><rect x="986" y="58" width="1" height="17" fill="#e8e8e8" shape-rendering="crispEdges"/><path d="M993.5 65.5 H1007 L1014.5 73 H1001.5 Z" fill="#fff" stroke="#000" stroke-width="1.3"/><path d="M993.5 60.5 H1007 L1014.5 68 H1001.5 Z" fill="#fff" stroke="#000" stroke-width="1.3"/><path d="M993.5 55.5 H1007 L1014.5 63 H1001.5 Z" fill="#fff" stroke="#000" stroke-width="1.3"/></svg>
<svg class="a" style="left:0;top:0" width="1024" height="768" viewBox="0 0 1024 768" font-family="Liberation Sans" ><defs>
<linearGradient id="gcy" x1="0" y1="0" x2="1" y2="1"><stop offset="0" stop-color="#d8fcfc"/><stop offset="0.5" stop-color="#a4dce4"/><stop offset="1" stop-color="#5c9098"/></linearGradient>
<radialGradient id="gballw" cx="0.4" cy="0.35" r="0.75"><stop offset="0" stop-color="#ffffff"/><stop offset="0.6" stop-color="#e8e8e8"/><stop offset="1" stop-color="#707070"/></radialGradient>
</defs><rect x="0" y="85" width="1" height="603" fill="#f0f0f0" shape-rendering="crispEdges"/><rect x="1" y="85" width="37" height="602" fill="#c8c8c8" shape-rendering="crispEdges"/><rect x="1" y="85" width="37" height="1" fill="#f0f0f0" shape-rendering="crispEdges"/><rect x="38" y="85" width="1" height="603" fill="#808080" shape-rendering="crispEdges"/><rect x="39" y="85" width="1" height="603" fill="#e0e0e0" shape-rendering="crispEdges"/><rect x="0" y="687" width="39" height="1" fill="#707070" shape-rendering="crispEdges"/><rect x="3" y="88" width="33" height="1" fill="#f0f0f0" shape-rendering="crispEdges"/><rect x="3" y="89" width="33" height="1" fill="#707070" shape-rendering="crispEdges"/><rect x="6" y="248" width="30" height="1" fill="#707070" shape-rendering="crispEdges"/><rect x="6" y="249" width="30" height="1" fill="#f0f0f0" shape-rendering="crispEdges"/><rect x="6" y="533" width="30" height="1" fill="#707070" shape-rendering="crispEdges"/><rect x="6" y="534" width="30" height="1" fill="#f0f0f0" shape-rendering="crispEdges"/><path d="M13.5 98 h8 v9.5 h-8 z" fill="#b4f4f8" stroke="#000" stroke-width="1.2"/><path d="M21.5 98 l4 1.5 v8.5 l-4 -0.5 z" fill="#3c6468" stroke="#000" stroke-width="0.8"/><path d="M7.5 108 h7 v9 h-7 z" fill="#b4f4f8" stroke="#000" stroke-width="1.2"/><path d="M14.5 108 l4 1.5 v8 l-4 -0.5 z" fill="#3c6468" stroke="#000" stroke-width="0.8"/><path d="M18 108 h8.5 v10 h-8.5 z" fill="#b4f4f8" stroke="#000" stroke-width="1.2"/><path d="M26.5 108 l4 1.5 v9 l-4 -0.5 z" fill="#3c6468" stroke="#000" stroke-width="0.8"/><path d="M7.5 135 Q9 132 13 131.3 L16.5 131 Q19 133.5 21.5 131 L25 131.3 Q29 132 30.5 135 L28 137.5 L25.2 136.5 L25.4 146.8 Q19 148.8 12.6 146.8 L12.8 136.5 L10 137.5 Z" fill="#a4dce4" stroke="#7cb0b8" stroke-width="0.8"/><text x="16" y="143.5" font-size="8" fill="#78aab4" stroke="#78aab4" stroke-width="0.15" font-weight="bold" textLength="6" lengthAdjust="spacingAndGlyphs" >C</text><circle cx="19.2" cy="170" r="11.8" fill="url(#gballw)" stroke="#808080" stroke-width="0.6"/><path d="M9 164 Q14 158.5 24 159.5 Q12 166 8 174 Q7.3 169 9 164 Z" fill="#a4dce4"/><path d="M24.5 160 Q22 172 16 181.5 Q12 180 11.5 179 Q20 170 24.5 160 Z" fill="#a4dce4"/><path d="M25.5 160.5 Q29.5 163 30.8 168 Q28 165 25 164 Z" fill="#a4dce4"/><path d="M24.5 160 Q12 166 8 174 M24.5 160 Q20 170 11.5 179 M24.5 160 Q23 172 17 181.5 M24.5 160 Q28 164 31 169" fill="none" stroke="#507078" stroke-width="0.6"/><ellipse cx="19" cy="205" rx="11.5" ry="4.6" fill="#a4dce4" stroke="#5c9098" stroke-width="1"/><ellipse cx="19" cy="204.5" rx="7" ry="2.4" fill="none" stroke="#e0fcfc" stroke-width="1"/><path d="M18 192.5 L19.6 204" stroke="#305058" stroke-width="2"/><path d="M17.5 192.5 L18.8 201" stroke="#90c8d0" stroke-width="1"/><path d="M19 220.5 Q21.5 222 21.5 227 Q25 226.5 28.5 227.5 Q26 230.5 22.5 230.5 Q23.5 236 24.5 243 Q22 244 20.5 240 Q19 236 17 235 Q16 239 14.5 242 Q12 242 12.5 239 Q14 235 14.5 230.5 Q12 228.5 9.5 226 Q13 225.5 15.5 227.5 Q16.5 222 19 220.5 Z" fill="url(#gcy)" stroke="#48747c" stroke-width="0.7"/><path d="M10 262 H28 L30.5 276.8 H7.8 Z" fill="#000"/><path d="M20.2 263.2 H27.4 L28.2 268 H20 Z" fill="#b4f4f8"/><path d="M9.8 269.3 H18 L18 276 H8.8 Z" fill="#a4dce4"/><ellipse cx="18.5" cy="293.5" rx="9" ry="2.9" fill="none" stroke="#5c9098" stroke-width="2.2"/><ellipse cx="18.5" cy="293.1" rx="9" ry="2.9" fill="none" stroke="#a4dce4" stroke-width="1.3"/><ellipse cx="18.5" cy="298" rx="9" ry="2.9" fill="none" stroke="#5c9098" stroke-width="2.2"/><ellipse cx="18.5" cy="297.6" rx="9" ry="2.9" fill="none" stroke="#a4dce4" stroke-width="1.3"/><ellipse cx="18.5" cy="302.5" rx="9" ry="2.9" fill="none" stroke="#5c9098" stroke-width="2.2"/><ellipse cx="18.5" cy="302.1" rx="9" ry="2.9" fill="none" stroke="#a4dce4" stroke-width="1.3"/><ellipse cx="18.5" cy="306.5" rx="9" ry="2.9" fill="none" stroke="#5c9098" stroke-width="2.2"/><ellipse cx="18.5" cy="306.1" rx="9" ry="2.9" fill="none" stroke="#a4dce4" stroke-width="1.3"/><g transform="rotate(45 19 331)"><rect x="4" y="328" width="9" height="5" fill="#a4dce4" stroke="#000" stroke-width="0.8"/><rect x="13" y="327.5" width="1.8" height="6.5" fill="#000"/><rect x="14.5" y="326.5" width="17" height="8.5" fill="#a4dce4" stroke="#403020" stroke-width="0.8"/><rect x="31" y="328.5" width="2.5" height="4.5" fill="#000"/><rect x="3" y="329" width="2" height="3.5" fill="#000"/></g><rect x="16.3" y="352.5" width="2.4" height="10" fill="#a4dce4" stroke="#305058" stroke-width="0.8"/><rect x="19" y="362.3" width="10" height="2.2" fill="#a4dce4" stroke="#305058" stroke-width="0.8"/><path d="M20.5 352.5 Q27.5 354 28.8 360.5" fill="none" stroke="#3a2820" stroke-width="1"/><g transform="rotate(-42 17 364)"><rect x="5" y="360.5" width="13" height="6.5" fill="#a4dce4" stroke="#302820" stroke-width="0.9"/><rect x="3.5" y="362" width="2" height="3.5" fill="#000"/></g><path d="M30.3 391.4 L30.5 393.3 L28.3 394.9 L27.9 396.3 L29.3 398.9 L28.3 400.5 L25.7 400.0 L24.6 400.9 L24.2 403.8 L22.6 404.4 L20.8 402.2 L19.5 402.1 L17.5 404.0 L15.9 403.3 L15.8 400.3 L14.8 399.3 L12.2 399.3 L11.4 397.6 L13.0 395.3 L12.9 393.8 L10.8 392.0 L11.2 390.1 L13.8 389.5 L14.5 388.2 L14.0 385.4 L15.4 384.2 L17.8 385.6 L19.1 385.2 L20.3 382.6 L22.1 382.7 L23.1 385.4 L24.3 386.0 L26.8 385.0 L28.0 386.3 L27.2 389.1 L27.8 390.5 Z" fill="#3c5c60"/><path d="M28.7 390.8 L28.9 392.7 L26.7 394.3 L26.3 395.7 L27.7 398.3 L26.7 399.9 L24.1 399.4 L23.0 400.3 L22.6 403.2 L21.0 403.8 L19.2 401.6 L17.9 401.5 L15.9 403.4 L14.3 402.7 L14.2 399.7 L13.2 398.7 L10.6 398.7 L9.8 397.0 L11.4 394.7 L11.3 393.2 L9.2 391.4 L9.6 389.5 L12.2 388.9 L12.9 387.6 L12.4 384.8 L13.8 383.6 L16.2 385.0 L17.5 384.6 L18.7 382.0 L20.5 382.1 L21.5 384.8 L22.7 385.4 L25.2 384.4 L26.4 385.7 L25.6 388.5 L26.2 389.9 Z" fill="#a4dce4" stroke="#6a9ca4" stroke-width="0.5"/><ellipse cx="18" cy="393" rx="4.4" ry="5.4" fill="#c8c8c8" stroke="#385054" stroke-width="1.6"/><path d="M8 428.5 H29" stroke="#203038" stroke-width="1"/><path d="M19.8 428 V436" stroke="#5c8c94" stroke-width="1.8"/><path d="M7 427 L11 428.5 L7 430 Z M27 426.5 L30.8 428.5 L27 430.5 Z" fill="#f0ffff" stroke="#90b8c0" stroke-width="0.5"/><path d="M14.5 420.5 Q17 423 20 420.5 Q21.5 417 23.5 417 Q24.5 420 23 423.5 Q21.5 426.5 19 427.5 Q15 426 14.2 423 Z" fill="#e8ffff" stroke="#90b8c0" stroke-width="0.6"/><path d="M8.5 457.5 Q10 455.5 16 453.5 L25 451 Q29 451 30 452 L27.5 455.5 L22 461 Q19 462.5 14 461.5 Q9 460.5 8.5 457.5 Z" fill="#a4dce4" stroke="#88b0b8" stroke-width="0.5"/><path d="M16 453 Q18 450 22 450 Q27 450 28 452.5 L24 454 Q20 455 17 454 Z" fill="#406088"/><path d="M18 450.8 Q22 449.5 27 451" stroke="#d09040" stroke-width="1" fill="none"/><circle cx="22.3" cy="459.3" r="1.2" fill="#000"/><circle cx="27.3" cy="456.3" r="0.9" fill="#000"/><circle cx="20" cy="462" r="1" fill="#000"/><path d="M9 458.5 Q13 461.5 19 462" stroke="#c09090" stroke-width="0.8" fill="none"/><path d="M14 475 L20 477 L19.5 484 L13 481.5 Z" fill="#c4fcfc"/><path d="M22 477.5 L27.5 479 L27.5 485.5 L22 484 Z" fill="#c4fcfc"/><path d="M13 481.5 L19.5 484 L17 494 L9.5 491.5 Z" fill="#a4dce4"/><path d="M22 484 L27.5 485.5 L22.5 496.5 L17.5 494.5 Z" fill="#a4dce4"/><path d="M20.3 476.5 L21 486 L19 489 L20.5 491.5 L18 495" stroke="#203840" stroke-width="1.2" fill="none"/><path d="M14 475 L13 481.5 L9.5 491.5" stroke="#d8ffff" stroke-width="1" fill="none"/><path d="M9.5 510.7 q2.5 -2.4 5 0 t5 0 t5 0 t4.5 -0.5" fill="none" stroke="#207478" stroke-width="1.5"/><path d="M9.5 515.2 q2.5 -2.4 5 0 t5 0 t5 0 t4.5 -0.5" fill="none" stroke="#207478" stroke-width="1.5"/><path d="M9.5 519.7 q2.5 -2.4 5 0 t5 0 t5 0 t4.5 -0.5" fill="none" stroke="#207478" stroke-width="1.5"/><g fill="none" stroke-linecap="round"><ellipse cx="18" cy="553" rx="9.5" ry="5.5" transform="rotate(10 18 553)" stroke="#5c9098" stroke-width="3"/><ellipse cx="22.5" cy="551" rx="5.5" ry="9" transform="rotate(35 22.5 551)" stroke="#5c9098" stroke-width="3"/><ellipse cx="22" cy="557.5" rx="6" ry="8" transform="rotate(-20 22 557.5)" stroke="#5c9098" stroke-width="3"/><ellipse cx="18" cy="553" rx="9.5" ry="5.5" transform="rotate(10 18 553)" stroke="#d0f8fc" stroke-width="1.5"/><ellipse cx="22.5" cy="551" rx="5.5" ry="9" transform="rotate(35 22.5 551)" stroke="#d0f8fc" stroke-width="1.5"/><ellipse cx="22" cy="557.5" rx="6" ry="8" transform="rotate(-20 22 557.5)" stroke="#d0f8fc" stroke-width="1.5"/></g><path d="M8.5 575.5 L14 577 L17.5 577 L17.5 574 Q19.5 572.5 21 574 L21 577 L25 578 L29.8 579.5 L29.5 580.8 L24 580 L21.5 580.5 L22 588 L22.5 596.5 L20.5 596.5 L19.8 589 L18.5 596.5 L16 596.5 L17.2 588 L17 580.5 L13.5 579 L8.5 577 Z" fill="#a4dce4" stroke="#406068" stroke-width="0.7"/><path d="M18.5 589 L21.5 589" stroke="#203038" stroke-width="1.2"/><path d="M9.5 608.5 L20.5 608.5 L22 626.5 L12.5 627.5 Z" fill="#a4dce4" stroke="#5c9098" stroke-width="0.8"/><path d="M20.5 608.5 L24.8 604.5 L28.5 623 L22 626.5 Z" fill="#4c7c84" stroke="#305058" stroke-width="0.6"/><circle cx="15.5" cy="612.5" r="1" fill="#5c9098"/><circle cx="14.5" cy="618" r="1" fill="#5c9098"/><circle cx="18" cy="623.5" r="1" fill="#5c9098"/><path d="M20.8 610 L22 626" stroke="#d8ffff" stroke-width="1.2" stroke-dasharray="2 2"/><g transform="rotate(32 12 649)"><rect x="7.5" y="645" width="9" height="8" fill="#5c8c94" stroke="#88b8c0" stroke-width="0.6"/><rect x="7.5" y="645" width="2.8" height="8" fill="#f0ffff"/></g><g transform="rotate(-8 26 644)"><rect x="21.5" y="639.5" width="8" height="9.5" fill="#5c8c94" stroke="#88b8c0" stroke-width="0.6"/><rect x="21.5" y="639.5" width="8" height="3.6" fill="#f0ffff"/></g><path d="M16.5 647.5 L22 644.5" stroke="#405860" stroke-width="1.2" stroke-dasharray="2 1"/><path d="M13 669.5 V683 M18.5 666.5 V684.5 M16 669 V679" stroke="#a4dce4" stroke-width="1.6"/><path d="M14 669.5 V683 M19.6 666.5 V684.5" stroke="#6aa0a8" stroke-width="0.6"/><path d="M11 683.5 L20.5 679 L27.5 684 M11 683.5 L14.5 685.5" fill="none" stroke="#a4dce4" stroke-width="1.8"/><path d="M11 684.5 L20.5 680 L27.5 685" fill="none" stroke="#80a8b0" stroke-width="0.6"/></svg>
<svg class="a" style="left:0;top:0" width="1024" height="768" viewBox="0 0 1024 768" shape-rendering="crispEdges"><rect x="40" y="85" width="398" height="277" fill="#2b3a4a"/><rect x="42" y="87" width="394" height="273" fill="#7d7d7d"/><rect x="44" y="87" width="1" height="273" fill="#8f8f8f"/><rect x="59" y="87" width="1" height="273" fill="#8f8f8f"/><rect x="74" y="87" width="1" height="273" fill="#8f8f8f"/><rect x="89" y="87" width="1" height="273" fill="#898989"/><rect x="104" y="87" width="1" height="273" fill="#8f8f8f"/><rect x="119" y="87" width="1" height="273" fill="#8f8f8f"/><rect x="134" y="87" width="1" height="273" fill="#8f8f8f"/><rect x="149" y="87" width="1" height="273" fill="#8f8f8f"/><rect x="164" y="87" width="1" height="273" fill="#8f8f8f"/><rect x="179" y="87" width="1" height="273" fill="#8f8f8f"/><rect x="194" y="87" width="1" height="273" fill="#8f8f8f"/><rect x="209" y="87" width="1" height="273" fill="#8f8f8f"/><rect x="224" y="87" width="1" height="273" fill="#8f8f8f"/><rect x="253" y="87" width="1" height="273" fill="#8f8f8f"/><rect x="268" y="87" width="1" height="273" fill="#8f8f8f"/><rect x="283" y="87" width="1" height="273" fill="#8f8f8f"/><rect x="298" y="87" width="1" height="273" fill="#8f8f8f"/><rect x="313" y="87" width="1" height="273" fill="#8f8f8f"/><rect x="328" y="87" width="1" height="273" fill="#8f8f8f"/><rect x="343" y="87" width="1" height="273" fill="#8f8f8f"/><rect x="358" y="87" width="1" height="273" fill="#8f8f8f"/><rect x="373" y="87" width="1" height="273" fill="#8f8f8f"/><rect x="388" y="87" width="1" height="273" fill="#898989"/><rect x="403" y="87" width="1" height="273" fill="#8f8f8f"/><rect x="418" y="87" width="1" height="273" fill="#8f8f8f"/><rect x="433" y="87" width="1" height="273" fill="#8f8f8f"/><rect x="42" y="89" width="394" height="1" fill="#8f8f8f"/><rect x="42" y="104" width="394" height="1" fill="#8f8f8f"/><rect x="42" y="119" width="394" height="1" fill="#8f8f8f"/><rect x="42" y="134" width="394" height="1" fill="#8f8f8f"/><rect x="42" y="149" width="394" height="1" fill="#8f8f8f"/><rect x="42" y="164" width="394" height="1" fill="#8f8f8f"/><rect x="42" y="179" width="394" height="1" fill="#8f8f8f"/><rect x="42" y="193" width="394" height="1" fill="#8f8f8f"/><rect x="42" y="208" width="394" height="1" fill="#8f8f8f"/><rect x="42" y="238" width="394" height="1" fill="#8f8f8f"/><rect x="42" y="253" width="394" height="1" fill="#8f8f8f"/><rect x="42" y="268" width="394" height="1" fill="#8f8f8f"/><rect x="42" y="283" width="394" height="1" fill="#8f8f8f"/><rect x="42" y="298" width="394" height="1" fill="#8f8f8f"/><rect x="42" y="313" width="394" height="1" fill="#8f8f8f"/><rect x="42" y="328" width="394" height="1" fill="#8f8f8f"/><rect x="42" y="343" width="394" height="1" fill="#8f8f8f"/><rect x="42" y="358" width="394" height="1" fill="#8f8f8f"/><rect x="238" y="87" width="1" height="273" fill="#000"/><rect x="42" y="223" width="394" height="1" fill="#000"/><rect x="127" y="109" width="1" height="225" fill="#fff"/><rect x="142" y="109" width="1" height="225" fill="#fff"/><rect x="157" y="109" width="1" height="225" fill="#fff"/><rect x="172" y="109" width="1" height="225" fill="#fff"/><rect x="187" y="109" width="1" height="225" fill="#fff"/><rect x="202" y="109" width="1" height="225" fill="#fff"/><rect x="217" y="109" width="1" height="225" fill="#fff"/><rect x="232" y="109" width="1" height="225" fill="#fff"/><rect x="246" y="109" width="1" height="225" fill="#fff"/><rect x="261" y="109" width="1" height="225" fill="#fff"/><rect x="276" y="109" width="1" height="225" fill="#fff"/><rect x="291" y="109" width="1" height="225" fill="#fff"/><rect x="306" y="109" width="1" height="225" fill="#fff"/><rect x="321" y="109" width="1" height="225" fill="#fff"/><rect x="336" y="109" width="1" height="225" fill="#fff"/><rect x="351" y="109" width="1" height="225" fill="#fff"/><rect x="127" y="109" width="225" height="1" fill="#fff"/><rect x="127" y="124" width="225" height="1" fill="#fff"/><rect x="127" y="139" width="225" height="1" fill="#fff"/><rect x="127" y="154" width="225" height="1" fill="#fff"/><rect x="127" y="169" width="225" height="1" fill="#fff"/><rect x="127" y="184" width="225" height="1" fill="#fff"/><rect x="127" y="199" width="225" height="1" fill="#fff"/><rect x="127" y="214" width="225" height="1" fill="#fff"/><rect x="127" y="229" width="225" height="1" fill="#fff"/><rect x="127" y="244" width="225" height="1" fill="#fff"/><rect x="127" y="259" width="225" height="1" fill="#fff"/><rect x="127" y="274" width="225" height="1" fill="#fff"/><rect x="127" y="289" width="225" height="1" fill="#fff"/><rect x="127" y="303" width="225" height="1" fill="#fff"/><rect x="127" y="318" width="225" height="1" fill="#fff"/><rect x="127" y="333" width="225" height="1" fill="#fff"/><rect x="126" y="108" width="4" height="4" fill="#4a4afc"/><rect x="126" y="123" width="4" height="4" fill="#4a4afc"/><rect x="126" y="138" width="4" height="4" fill="#4a4afc"/><rect x="126" y="152" width="4" height="4" fill="#4a4afc"/><rect x="126" y="167" width="4" height="4" fill="#4a4afc"/><rect x="126" y="182" width="4" height="4" fill="#4a4afc"/><rect x="126" y="197" width="4" height="4" fill="#4a4afc"/><rect x="126" y="212" width="4" height="4" fill="#4a4afc"/><rect x="126" y="227" width="4" height="4" fill="#4a4afc"/><rect x="126" y="242" width="4" height="4" fill="#4a4afc"/><rect x="126" y="257" width="4" height="4" fill="#4a4afc"/><rect x="126" y="272" width="4" height="4" fill="#4a4afc"/><rect x="126" y="287" width="4" height="4" fill="#4a4afc"/><rect x="126" y="302" width="4" height="4" fill="#4a4afc"/><rect x="126" y="317" width="4" height="4" fill="#4a4afc"/><rect x="126" y="332" width="4" height="4" fill="#4a4afc"/><rect x="140" y="108" width="4" height="4" fill="#4a4afc"/><rect x="140" y="123" width="4" height="4" fill="#4a4afc"/><rect x="140" y="138" width="4" height="4" fill="#4a4afc"/><rect x="140" y="152" width="4" height="4" fill="#4a4afc"/><rect x="140" y="167" width="4" height="4" fill="#4a4afc"/><rect x="140" y="182" width="4" height="4" fill="#4a4afc"/><rect x="140" y="197" width="4" height="4" fill="#4a4afc"/><rect x="140" y="212" width="4" height="4" fill="#4a4afc"/><rect x="140" y="227" width="4" height="4" fill="#4a4afc"/><rect x="140" y="242" width="4" height="4" fill="#4a4afc"/><rect x="140" y="257" width="4" height="4" fill="#4a4afc"/><rect x="140" y="272" width="4" height="4" fill="#4a4afc"/><rect x="140" y="287" width="4" height="4" fill="#4a4afc"/><rect x="140" y="302" width="4" height="4" fill="#4a4afc"/><rect x="140" y="317" width="4" height="4" fill="#4a4afc"/><rect x="140" y="332" width="4" height="4" fill="#4a4afc"/><rect x="155" y="108" width="4" height="4" fill="#4a4afc"/><rect x="155" y="123" width="4" height="4" fill="#4a4afc"/><rect x="155" y="138" width="4" height="4" fill="#4a4afc"/><rect x="155" y="152" width="4" height="4" fill="#4a4afc"/><rect x="155" y="167" width="4" height="4" fill="#4a4afc"/><rect x="155" y="182" width="4" height="4" fill="#4a4afc"/><rect x="155" y="197" width="4" height="4" fill="#4a4afc"/><rect x="155" y="212" width="4" height="4" fill="#4a4afc"/><rect x="155" y="227" width="4" height="4" fill="#4a4afc"/><rect x="155" y="242" width="4" height="4" fill="#4a4afc"/><rect x="155" y="257" width="4" height="4" fill="#4a4afc"/><rect x="155" y="272" width="4" height="4" fill="#4a4afc"/><rect x="155" y="287" width="4" height="4" fill="#4a4afc"/><rect x="155" y="302" width="4" height="4" fill="#4a4afc"/><rect x="155" y="317" width="4" height="4" fill="#4a4afc"/><rect x="155" y="332" width="4" height="4" fill="#4a4afc"/><rect x="170" y="108" width="4" height="4" fill="#4a4afc"/><rect x="170" y="123" width="4" height="4" fill="#4a4afc"/><rect x="170" y="138" width="4" height="4" fill="#4a4afc"/><rect x="170" y="152" width="4" height="4" fill="#4a4afc"/><rect x="170" y="167" width="4" height="4" fill="#4a4afc"/><rect x="170" y="182" width="4" height="4" fill="#4a4afc"/><rect x="170" y="197" width="4" height="4" fill="#4a4afc"/><rect x="170" y="212" width="4" height="4" fill="#4a4afc"/><rect x="170" y="227" width="4" height="4" fill="#4a4afc"/><rect x="170" y="242" width="4" height="4" fill="#4a4afc"/><rect x="170" y="257" width="4" height="4" fill="#4a4afc"/><rect x="170" y="272" width="4" height="4" fill="#4a4afc"/><rect x="170" y="287" width="4" height="4" fill="#4a4afc"/><rect x="170" y="302" width="4" height="4" fill="#4a4afc"/><rect x="170" y="317" width="4" height="4" fill="#4a4afc"/><rect x="170" y="332" width="4" height="4" fill="#4a4afc"/><rect x="185" y="108" width="4" height="4" fill="#4a4afc"/><rect x="185" y="123" width="4" height="4" fill="#4a4afc"/><rect x="185" y="138" width="4" height="4" fill="#4a4afc"/><rect x="185" y="152" width="4" height="4" fill="#4a4afc"/><rect x="185" y="167" width="4" height="4" fill="#4a4afc"/><rect x="185" y="182" width="4" height="4" fill="#4a4afc"/><rect x="185" y="197" width="4" height="4" fill="#4a4afc"/><rect x="185" y="212" width="4" height="4" fill="#4a4afc"/><rect x="185" y="227" width="4" height="4" fill="#4a4afc"/><rect x="185" y="242" width="4" height="4" fill="#4a4afc"/><rect x="185" y="257" width="4" height="4" fill="#4a4afc"/><rect x="185" y="272" width="4" height="4" fill="#4a4afc"/><rect x="185" y="287" width="4" height="4" fill="#4a4afc"/><rect x="185" y="302" width="4" height="4" fill="#4a4afc"/><rect x="185" y="317" width="4" height="4" fill="#4a4afc"/><rect x="185" y="332" width="4" height="4" fill="#4a4afc"/><rect x="200" y="108" width="4" height="4" fill="#4a4afc"/><rect x="200" y="123" width="4" height="4" fill="#4a4afc"/><rect x="200" y="138" width="4" height="4" fill="#4a4afc"/><rect x="200" y="152" width="4" height="4" fill="#4a4afc"/><rect x="200" y="167" width="4" height="4" fill="#4a4afc"/><rect x="200" y="182" width="4" height="4" fill="#4a4afc"/><rect x="200" y="197" width="4" height="4" fill="#4a4afc"/><rect x="200" y="212" width="4" height="4" fill="#4a4afc"/><rect x="200" y="227" width="4" height="4" fill="#4a4afc"/><rect x="200" y="242" width="4" height="4" fill="#4a4afc"/><rect x="200" y="257" width="4" height="4" fill="#4a4afc"/><rect x="200" y="272" width="4" height="4" fill="#4a4afc"/><rect x="200" y="287" width="4" height="4" fill="#4a4afc"/><rect x="200" y="302" width="4" height="4" fill="#4a4afc"/><rect x="200" y="317" width="4" height="4" fill="#4a4afc"/><rect x="200" y="332" width="4" height="4" fill="#4a4afc"/><rect x="215" y="108" width="4" height="4" fill="#4a4afc"/><rect x="215" y="123" width="4" height="4" fill="#4a4afc"/><rect x="215" y="138" width="4" height="4" fill="#4a4afc"/><rect x="215" y="152" width="4" height="4" fill="#4a4afc"/><rect x="215" y="167" width="4" height="4" fill="#4a4afc"/><rect x="215" y="182" width="4" height="4" fill="#4a4afc"/><rect x="215" y="197" width="4" height="4" fill="#4a4afc"/><rect x="215" y="212" width="4" height="4" fill="#4a4afc"/><rect x="215" y="227" width="4" height="4" fill="#4a4afc"/><rect x="215" y="242" width="4" height="4" fill="#4a4afc"/><rect x="215" y="257" width="4" height="4" fill="#4a4afc"/><rect x="215" y="272" width="4" height="4" fill="#4a4afc"/><rect x="215" y="287" width="4" height="4" fill="#4a4afc"/><rect x="215" y="302" width="4" height="4" fill="#4a4afc"/><rect x="215" y="317" width="4" height="4" fill="#4a4afc"/><rect x="215" y="332" width="4" height="4" fill="#4a4afc"/><rect x="230" y="108" width="4" height="4" fill="#4a4afc"/><rect x="230" y="123" width="4" height="4" fill="#4a4afc"/><rect x="230" y="138" width="4" height="4" fill="#4a4afc"/><rect x="230" y="152" width="4" height="4" fill="#4a4afc"/><rect x="230" y="167" width="4" height="4" fill="#4a4afc"/><rect x="230" y="182" width="4" height="4" fill="#4a4afc"/><rect x="230" y="197" width="4" height="4" fill="#4a4afc"/><rect x="230" y="212" width="4" height="4" fill="#4a4afc"/><rect x="230" y="227" width="4" height="4" fill="#4a4afc"/><rect x="230" y="242" width="4" height="4" fill="#4a4afc"/><rect x="230" y="257" width="4" height="4" fill="#4a4afc"/><rect x="230" y="272" width="4" height="4" fill="#4a4afc"/><rect x="230" y="287" width="4" height="4" fill="#4a4afc"/><rect x="230" y="302" width="4" height="4" fill="#4a4afc"/><rect x="230" y="317" width="4" height="4" fill="#4a4afc"/><rect x="230" y="332" width="4" height="4" fill="#4a4afc"/><rect x="245" y="108" width="4" height="4" fill="#4a4afc"/><rect x="245" y="123" width="4" height="4" fill="#4a4afc"/><rect x="245" y="138" width="4" height="4" fill="#4a4afc"/><rect x="245" y="152" width="4" height="4" fill="#4a4afc"/><rect x="245" y="167" width="4" height="4" fill="#4a4afc"/><rect x="245" y="182" width="4" height="4" fill="#4a4afc"/><rect x="245" y="197" width="4" height="4" fill="#4a4afc"/><rect x="245" y="212" width="4" height="4" fill="#4a4afc"/><rect x="245" y="227" width="4" height="4" fill="#4a4afc"/><rect x="245" y="242" width="4" height="4" fill="#4a4afc"/><rect x="245" y="257" width="4" height="4" fill="#4a4afc"/><rect x="245" y="272" width="4" height="4" fill="#4a4afc"/><rect x="245" y="287" width="4" height="4" fill="#4a4afc"/><rect x="245" y="302" width="4" height="4" fill="#4a4afc"/><rect x="245" y="317" width="4" height="4" fill="#4a4afc"/><rect x="245" y="332" width="4" height="4" fill="#4a4afc"/><rect x="260" y="108" width="4" height="4" fill="#4a4afc"/><rect x="260" y="123" width="4" height="4" fill="#4a4afc"/><rect x="260" y="138" width="4" height="4" fill="#4a4afc"/><rect x="260" y="152" width="4" height="4" fill="#4a4afc"/><rect x="260" y="167" width="4" height="4" fill="#4a4afc"/><rect x="260" y="182" width="4" height="4" fill="#4a4afc"/><rect x="260" y="197" width="4" height="4" fill="#4a4afc"/><rect x="260" y="212" width="4" height="4" fill="#4a4afc"/><rect x="260" y="227" width="4" height="4" fill="#4a4afc"/><rect x="260" y="242" width="4" height="4" fill="#4a4afc"/><rect x="260" y="257" width="4" height="4" fill="#4a4afc"/><rect x="260" y="272" width="4" height="4" fill="#4a4afc"/><rect x="260" y="287" width="4" height="4" fill="#4a4afc"/><rect x="260" y="302" width="4" height="4" fill="#4a4afc"/><rect x="260" y="317" width="4" height="4" fill="#4a4afc"/><rect x="260" y="332" width="4" height="4" fill="#4a4afc"/><rect x="275" y="108" width="4" height="4" fill="#4a4afc"/><rect x="275" y="123" width="4" height="4" fill="#4a4afc"/><rect x="275" y="138" width="4" height="4" fill="#4a4afc"/><rect x="275" y="152" width="4" height="4" fill="#4a4afc"/><rect x="275" y="167" width="4" height="4" fill="#4a4afc"/><rect x="275" y="182" width="4" height="4" fill="#4a4afc"/><rect x="275" y="197" width="4" height="4" fill="#4a4afc"/><rect x="275" y="212" width="4" height="4" fill="#4a4afc"/><rect x="275" y="227" width="4" height="4" fill="#4a4afc"/><rect x="275" y="242" width="4" height="4" fill="#4a4afc"/><rect x="275" y="257" width="4" height="4" fill="#4a4afc"/><rect x="275" y="272" width="4" height="4" fill="#4a4afc"/><rect x="275" y="287" width="4" height="4" fill="#4a4afc"/><rect x="275" y="302" width="4" height="4" fill="#4a4afc"/><rect x="275" y="317" width="4" height="4" fill="#4a4afc"/><rect x="275" y="332" width="4" height="4" fill="#4a4afc"/><rect x="290" y="108" width="4" height="4" fill="#4a4afc"/><rect x="290" y="123" width="4" height="4" fill="#4a4afc"/><rect x="290" y="138" width="4" height="4" fill="#4a4afc"/><rect x="290" y="152" width="4" height="4" fill="#4a4afc"/><rect x="290" y="167" width="4" height="4" fill="#4a4afc"/><rect x="290" y="182" width="4" height="4" fill="#4a4afc"/><rect x="290" y="197" width="4" height="4" fill="#4a4afc"/><rect x="290" y="212" width="4" height="4" fill="#4a4afc"/><rect x="290" y="227" width="4" height="4" fill="#4a4afc"/><rect x="290" y="242" width="4" height="4" fill="#4a4afc"/><rect x="290" y="257" width="4" height="4" fill="#4a4afc"/><rect x="290" y="272" width="4" height="4" fill="#4a4afc"/><rect x="290" y="287" width="4" height="4" fill="#4a4afc"/><rect x="290" y="302" width="4" height="4" fill="#4a4afc"/><rect x="290" y="317" width="4" height="4" fill="#4a4afc"/><rect x="290" y="332" width="4" height="4" fill="#4a4afc"/><rect x="305" y="108" width="4" height="4" fill="#4a4afc"/><rect x="305" y="123" width="4" height="4" fill="#4a4afc"/><rect x="305" y="138" width="4" height="4" fill="#4a4afc"/><rect x="305" y="152" width="4" height="4" fill="#4a4afc"/><rect x="305" y="167" width="4" height="4" fill="#4a4afc"/><rect x="305" y="182" width="4" height="4" fill="#4a4afc"/><rect x="305" y="197" width="4" height="4" fill="#4a4afc"/><rect x="305" y="212" width="4" height="4" fill="#4a4afc"/><rect x="305" y="227" width="4" height="4" fill="#4a4afc"/><rect x="305" y="242" width="4" height="4" fill="#4a4afc"/><rect x="305" y="257" width="4" height="4" fill="#4a4afc"/><rect x="305" y="272" width="4" height="4" fill="#4a4afc"/><rect x="305" y="287" width="4" height="4" fill="#4a4afc"/><rect x="305" y="302" width="4" height="4" fill="#4a4afc"/><rect x="305" y="317" width="4" height="4" fill="#4a4afc"/><rect x="305" y="332" width="4" height="4" fill="#4a4afc"/><rect x="320" y="108" width="4" height="4" fill="#4a4afc"/><rect x="320" y="123" width="4" height="4" fill="#4a4afc"/><rect x="320" y="138" width="4" height="4" fill="#4a4afc"/><rect x="320" y="152" width="4" height="4" fill="#4a4afc"/><rect x="320" y="167" width="4" height="4" fill="#4a4afc"/><rect x="320" y="182" width="4" height="4" fill="#4a4afc"/><rect x="320" y="197" width="4" height="4" fill="#4a4afc"/><rect x="320" y="212" width="4" height="4" fill="#4a4afc"/><rect x="320" y="227" width="4" height="4" fill="#4a4afc"/><rect x="320" y="242" width="4" height="4" fill="#4a4afc"/><rect x="320" y="257" width="4" height="4" fill="#4a4afc"/><rect x="320" y="272" width="4" height="4" fill="#4a4afc"/><rect x="320" y="287" width="4" height="4" fill="#4a4afc"/><rect x="320" y="302" width="4" height="4" fill="#4a4afc"/><rect x="320" y="317" width="4" height="4" fill="#4a4afc"/><rect x="320" y="332" width="4" height="4" fill="#4a4afc"/><rect x="335" y="108" width="4" height="4" fill="#4a4afc"/><rect x="335" y="123" width="4" height="4" fill="#4a4afc"/><rect x="335" y="138" width="4" height="4" fill="#4a4afc"/><rect x="335" y="152" width="4" height="4" fill="#4a4afc"/><rect x="335" y="167" width="4" height="4" fill="#4a4afc"/><rect x="335" y="182" width="4" height="4" fill="#4a4afc"/><rect x="335" y="197" width="4" height="4" fill="#4a4afc"/><rect x="335" y="212" width="4" height="4" fill="#4a4afc"/><rect x="335" y="227" width="4" height="4" fill="#4a4afc"/><rect x="335" y="242" width="4" height="4" fill="#4a4afc"/><rect x="335" y="257" width="4" height="4" fill="#4a4afc"/><rect x="335" y="272" width="4" height="4" fill="#4a4afc"/><rect x="335" y="287" width="4" height="4" fill="#4a4afc"/><rect x="335" y="302" width="4" height="4" fill="#4a4afc"/><rect x="335" y="317" width="4" height="4" fill="#4a4afc"/><rect x="335" y="332" width="4" height="4" fill="#4a4afc"/><rect x="349" y="108" width="4" height="4" fill="#4a4afc"/><rect x="349" y="123" width="4" height="4" fill="#4a4afc"/><rect x="349" y="138" width="4" height="4" fill="#4a4afc"/><rect x="349" y="152" width="4" height="4" fill="#4a4afc"/><rect x="349" y="167" width="4" height="4" fill="#4a4afc"/><rect x="349" y="182" width="4" height="4" fill="#4a4afc"/><rect x="349" y="197" width="4" height="4" fill="#4a4afc"/><rect x="349" y="212" width="4" height="4" fill="#4a4afc"/><rect x="349" y="227" width="4" height="4" fill="#4a4afc"/><rect x="349" y="242" width="4" height="4" fill="#4a4afc"/><rect x="349" y="257" width="4" height="4" fill="#4a4afc"/><rect x="349" y="272" width="4" height="4" fill="#4a4afc"/><rect x="349" y="287" width="4" height="4" fill="#4a4afc"/><rect x="349" y="302" width="4" height="4" fill="#4a4afc"/><rect x="349" y="317" width="4" height="4" fill="#4a4afc"/><rect x="349" y="332" width="4" height="4" fill="#4a4afc"/><text x="46.5" y="99" font-size="12" fill="#d4d4d4" stroke="#d4d4d4" stroke-width="0.12" font-family="Liberation Sans" textLength="17.1" lengthAdjust="spacingAndGlyphs">Top</text><rect x="67" y="311" width="1" height="25" fill="#00a000"/><rect x="68" y="335" width="24" height="1" fill="#e00000"/><text x="67.5" y="306" font-size="11" fill="#00a000" stroke="#00a000" stroke-width="0.35" font-family="Liberation Sans">y</text><text x="67.8" y="331" font-size="11" fill="#0000d8" stroke="#0000d8" stroke-width="0.35" font-family="Liberation Sans">z</text><text x="92.8" y="331" font-size="11" fill="#e00000" stroke="#e00000" stroke-width="0.35" font-family="Liberation Sans">x</text><rect x="442" y="85" width="398" height="277" fill="#2b3a4a"/><rect x="444" y="87" width="394" height="273" fill="#7d7d7d"/><rect x="461" y="87" width="1" height="273" fill="#8f8f8f"/><rect x="483" y="87" width="1" height="273" fill="#8f8f8f"/><rect x="506" y="87" width="1" height="273" fill="#8f8f8f"/><rect x="528" y="87" width="1" height="273" fill="#8f8f8f"/><rect x="550" y="87" width="1" height="273" fill="#8f8f8f"/><rect x="573" y="87" width="1" height="273" fill="#8f8f8f"/><rect x="595" y="87" width="1" height="273" fill="#8f8f8f"/><rect x="618" y="87" width="1" height="273" fill="#8f8f8f"/><rect x="662" y="87" width="1" height="273" fill="#8f8f8f"/><rect x="685" y="87" width="1" height="273" fill="#8f8f8f"/><rect x="707" y="87" width="1" height="273" fill="#8f8f8f"/><rect x="730" y="87" width="1" height="273" fill="#8f8f8f"/><rect x="752" y="87" width="1" height="273" fill="#8f8f8f"/><rect x="774" y="87" width="1" height="273" fill="#8f8f8f"/><rect x="797" y="87" width="1" height="273" fill="#8f8f8f"/><rect x="819" y="87" width="1" height="273" fill="#8f8f8f"/><rect x="444" y="89" width="394" height="1" fill="#8f8f8f"/><rect x="444" y="112" width="394" height="1" fill="#8f8f8f"/><rect x="444" y="134" width="394" height="1" fill="#8f8f8f"/><rect x="444" y="156" width="394" height="1" fill="#8f8f8f"/><rect x="444" y="179" width="394" height="1" fill="#8f8f8f"/><rect x="444" y="201" width="394" height="1" fill="#8f8f8f"/><rect x="444" y="246" width="394" height="1" fill="#8f8f8f"/><rect x="444" y="268" width="394" height="1" fill="#8f8f8f"/><rect x="444" y="291" width="394" height="1" fill="#8f8f8f"/><rect x="444" y="313" width="394" height="1" fill="#8f8f8f"/><rect x="444" y="335" width="394" height="1" fill="#8f8f8f"/><rect x="444" y="358" width="394" height="1" fill="#8f8f8f"/><rect x="640" y="87" width="1" height="273" fill="#000"/><rect x="444" y="223" width="394" height="1" fill="#000"/><rect x="473" y="223" width="336" height="1" fill="#fff"/><rect x="472" y="222" width="4" height="4" fill="#4a4afc"/><rect x="494" y="222" width="4" height="4" fill="#4a4afc"/><rect x="517" y="222" width="4" height="4" fill="#4a4afc"/><rect x="539" y="222" width="4" height="4" fill="#4a4afc"/><rect x="561" y="222" width="4" height="4" fill="#4a4afc"/><rect x="584" y="222" width="4" height="4" fill="#4a4afc"/><rect x="606" y="222" width="4" height="4" fill="#4a4afc"/><rect x="628" y="222" width="4" height="4" fill="#4a4afc"/><rect x="651" y="222" width="4" height="4" fill="#4a4afc"/><rect x="673" y="222" width="4" height="4" fill="#4a4afc"/><rect x="695" y="222" width="4" height="4" fill="#4a4afc"/><rect x="718" y="222" width="4" height="4" fill="#4a4afc"/><rect x="740" y="222" width="4" height="4" fill="#4a4afc"/><rect x="762" y="222" width="4" height="4" fill="#4a4afc"/><rect x="785" y="222" width="4" height="4" fill="#4a4afc"/><rect x="807" y="222" width="4" height="4" fill="#4a4afc"/><ellipse cx="527" cy="224.5" rx="57.5" ry="18" fill="none" stroke="#0000f0" stroke-width="1" shape-rendering="crispEdges"/><text x="448.5" y="99" font-size="12" fill="#d4d4d4" stroke="#d4d4d4" stroke-width="0.12" font-family="Liberation Sans" textLength="24.8" lengthAdjust="spacingAndGlyphs">Front</text><rect x="469" y="311" width="1" height="25" fill="#0000d8"/><text x="469.8" y="306" font-size="11" fill="#0000d8" stroke="#0000d8" stroke-width="0.35" font-family="Liberation Sans">z</text><text x="469.8" y="330" font-size="11" fill="#00a000" stroke="#00a000" stroke-width="0.35" font-family="Liberation Sans">y</text><text x="494.8" y="331" font-size="11" fill="#e00000" stroke="#e00000" stroke-width="0.35" font-family="Liberation Sans">x</text><rect x="40" y="366" width="398" height="277" fill="#2b3a4a"/><rect x="42" y="368" width="394" height="273" fill="#7d7d7d"/><rect x="60" y="368" width="1" height="273" fill="#8f8f8f"/><rect x="82" y="368" width="1" height="273" fill="#8f8f8f"/><rect x="105" y="368" width="1" height="273" fill="#8f8f8f"/><rect x="127" y="368" width="1" height="273" fill="#8f8f8f"/><rect x="149" y="368" width="1" height="273" fill="#8f8f8f"/><rect x="172" y="368" width="1" height="273" fill="#8f8f8f"/><rect x="194" y="368" width="1" height="273" fill="#8f8f8f"/><rect x="217" y="368" width="1" height="273" fill="#8f8f8f"/><rect x="261" y="368" width="1" height="273" fill="#8f8f8f"/><rect x="284" y="368" width="1" height="273" fill="#8f8f8f"/><rect x="306" y="368" width="1" height="273" fill="#8f8f8f"/><rect x="329" y="368" width="1" height="273" fill="#8f8f8f"/><rect x="351" y="368" width="1" height="273" fill="#8f8f8f"/><rect x="373" y="368" width="1" height="273" fill="#8f8f8f"/><rect x="396" y="368" width="1" height="273" fill="#8f8f8f"/><rect x="418" y="368" width="1" height="273" fill="#8f8f8f"/><rect x="42" y="370" width="394" height="1" fill="#8f8f8f"/><rect x="42" y="393" width="394" height="1" fill="#8f8f8f"/><rect x="42" y="415" width="394" height="1" fill="#8f8f8f"/><rect x="42" y="437" width="394" height="1" fill="#8f8f8f"/><rect x="42" y="460" width="394" height="1" fill="#8f8f8f"/><rect x="42" y="482" width="394" height="1" fill="#8f8f8f"/><rect x="42" y="527" width="394" height="1" fill="#8f8f8f"/><rect x="42" y="549" width="394" height="1" fill="#8f8f8f"/><rect x="42" y="571" width="394" height="1" fill="#8f8f8f"/><rect x="42" y="594" width="394" height="1" fill="#8f8f8f"/><rect x="42" y="616" width="394" height="1" fill="#8f8f8f"/><rect x="42" y="638" width="394" height="1" fill="#8f8f8f"/><rect x="239" y="368" width="1" height="273" fill="#000"/><rect x="42" y="504" width="394" height="1" fill="#000"/><rect x="68" y="504" width="336" height="1" fill="#fff"/><rect x="67" y="503" width="4" height="4" fill="#4a4afc"/><rect x="89" y="503" width="4" height="4" fill="#4a4afc"/><rect x="111" y="503" width="4" height="4" fill="#4a4afc"/><rect x="134" y="503" width="4" height="4" fill="#4a4afc"/><rect x="156" y="503" width="4" height="4" fill="#4a4afc"/><rect x="178" y="503" width="4" height="4" fill="#4a4afc"/><rect x="201" y="503" width="4" height="4" fill="#4a4afc"/><rect x="223" y="503" width="4" height="4" fill="#4a4afc"/><rect x="246" y="503" width="4" height="4" fill="#4a4afc"/><rect x="268" y="503" width="4" height="4" fill="#4a4afc"/><rect x="290" y="503" width="4" height="4" fill="#4a4afc"/><rect x="313" y="503" width="4" height="4" fill="#4a4afc"/><rect x="335" y="503" width="4" height="4" fill="#4a4afc"/><rect x="357" y="503" width="4" height="4" fill="#4a4afc"/><rect x="380" y="503" width="4" height="4" fill="#4a4afc"/><rect x="402" y="503" width="4" height="4" fill="#4a4afc"/><text x="46.5" y="380" font-size="12" fill="#d4d4d4" stroke="#d4d4d4" stroke-width="0.12" font-family="Liberation Sans" textLength="17.7" lengthAdjust="spacingAndGlyphs">Left</text><rect x="67" y="592" width="1" height="2" fill="#0000d8"/><rect x="67" y="595" width="1" height="21" fill="#0000d8"/><text x="67.8" y="587" font-size="11" fill="#0000d8" stroke="#0000d8" stroke-width="0.35" font-family="Liberation Sans">z</text><text x="42.8" y="611" font-size="11" fill="#00a000" stroke="#00a000" stroke-width="0.35" font-family="Liberation Sans">y</text><text x="67.8" y="612" font-size="11" fill="#e00000" stroke="#e00000" stroke-width="0.35" font-family="Liberation Sans">x</text><rect x="442" y="366" width="398" height="277" fill="#ffff00"/><rect x="444" y="368" width="394" height="273" fill="#7d7d7d"/><text x="448.5" y="380" font-size="12" fill="#d4d4d4" stroke="#d4d4d4" stroke-width="0.12" font-family="Liberation Sans" textLength="55.5" lengthAdjust="spacingAndGlyphs">Perspective</text><polygon points="542.0,505.0 641.0,463.0 739.0,505.0 640.0,564.0" fill="#1a8c46" shape-rendering="crispEdges"/><line x1="542.0" y1="505.0" x2="566.8" y2="494.5" stroke="#fff" stroke-width="1" shape-rendering="crispEdges"/><line x1="619.2" y1="472.2" x2="641.0" y2="463.0" stroke="#fff" stroke-width="1" shape-rendering="crispEdges"/><line x1="641.0" y1="463.0" x2="665.5" y2="473.5" stroke="#fff" stroke-width="1" shape-rendering="crispEdges"/><line x1="717.4" y1="495.8" x2="739.0" y2="505.0" stroke="#fff" stroke-width="1" shape-rendering="crispEdges"/><line x1="739.0" y1="505.0" x2="714.2" y2="519.8" stroke="#fff" stroke-width="1" shape-rendering="crispEdges"/><line x1="661.8" y1="551.0" x2="640.0" y2="564.0" stroke="#fff" stroke-width="1" shape-rendering="crispEdges"/><line x1="640.0" y1="564.0" x2="615.5" y2="549.2" stroke="#fff" stroke-width="1" shape-rendering="crispEdges"/><line x1="563.6" y1="518.0" x2="542.0" y2="505.0" stroke="#fff" stroke-width="1" shape-rendering="crispEdges"/><rect x="639" y="461" width="4" height="4" fill="#4a4afc"/><rect x="633" y="463" width="4" height="3" fill="#4a4afc"/><rect x="627" y="466" width="4" height="4" fill="#4a4afc"/><rect x="622" y="468" width="4" height="3" fill="#4a4afc"/><rect x="616" y="471" width="4" height="4" fill="#4a4afc"/><rect x="609" y="474" width="4" height="3" fill="#4a4afc"/><rect x="603" y="476" width="4" height="4" fill="#4a4afc"/><rect x="597" y="479" width="4" height="3" fill="#4a4afc"/><rect x="590" y="482" width="4" height="4" fill="#4a4afc"/><rect x="583" y="485" width="4" height="3" fill="#4a4afc"/><rect x="577" y="488" width="4" height="4" fill="#4a4afc"/><rect x="570" y="490" width="4" height="3" fill="#4a4afc"/><rect x="562" y="493" width="4" height="4" fill="#4a4afc"/><rect x="555" y="497" width="4" height="3" fill="#4a4afc"/><rect x="548" y="500" width="4" height="4" fill="#4a4afc"/><rect x="540" y="503" width="4" height="3" fill="#4a4afc"/><rect x="645" y="463" width="4" height="3" fill="#4a4afc"/><rect x="639" y="466" width="4" height="4" fill="#4a4afc"/><rect x="633" y="468" width="4" height="3" fill="#4a4afc"/><rect x="627" y="471" width="4" height="4" fill="#4a4afc"/><rect x="621" y="474" width="4" height="3" fill="#4a4afc"/><rect x="615" y="476" width="4" height="4" fill="#4a4afc"/><rect x="609" y="479" width="4" height="3" fill="#4a4afc"/><rect x="602" y="482" width="4" height="4" fill="#4a4afc"/><rect x="596" y="485" width="4" height="3" fill="#4a4afc"/><rect x="589" y="488" width="4" height="4" fill="#4a4afc"/><rect x="582" y="490" width="4" height="3" fill="#4a4afc"/><rect x="575" y="494" width="4" height="4" fill="#4a4afc"/><rect x="568" y="497" width="4" height="3" fill="#4a4afc"/><rect x="561" y="500" width="4" height="4" fill="#4a4afc"/><rect x="553" y="503" width="4" height="3" fill="#4a4afc"/><rect x="545" y="506" width="4" height="4" fill="#4a4afc"/><rect x="650" y="466" width="4" height="4" fill="#4a4afc"/><rect x="645" y="468" width="4" height="3" fill="#4a4afc"/><rect x="639" y="471" width="4" height="4" fill="#4a4afc"/><rect x="633" y="474" width="4" height="3" fill="#4a4afc"/><rect x="627" y="476" width="4" height="4" fill="#4a4afc"/><rect x="621" y="479" width="4" height="3" fill="#4a4afc"/><rect x="614" y="482" width="4" height="4" fill="#4a4afc"/><rect x="608" y="485" width="4" height="3" fill="#4a4afc"/><rect x="601" y="488" width="4" height="4" fill="#4a4afc"/><rect x="595" y="490" width="4" height="3" fill="#4a4afc"/><rect x="588" y="494" width="4" height="4" fill="#4a4afc"/><rect x="581" y="497" width="4" height="3" fill="#4a4afc"/><rect x="574" y="500" width="4" height="4" fill="#4a4afc"/><rect x="566" y="503" width="4" height="3" fill="#4a4afc"/><rect x="559" y="506" width="4" height="4" fill="#4a4afc"/><rect x="551" y="510" width="4" height="3" fill="#4a4afc"/><rect x="656" y="468" width="4" height="3" fill="#4a4afc"/><rect x="651" y="471" width="4" height="4" fill="#4a4afc"/><rect x="645" y="474" width="4" height="3" fill="#4a4afc"/><rect x="639" y="476" width="4" height="4" fill="#4a4afc"/><rect x="633" y="479" width="4" height="3" fill="#4a4afc"/><rect x="627" y="482" width="4" height="4" fill="#4a4afc"/><rect x="620" y="485" width="4" height="3" fill="#4a4afc"/><rect x="614" y="488" width="4" height="4" fill="#4a4afc"/><rect x="607" y="490" width="4" height="3" fill="#4a4afc"/><rect x="601" y="494" width="4" height="4" fill="#4a4afc"/><rect x="594" y="497" width="4" height="3" fill="#4a4afc"/><rect x="587" y="500" width="4" height="4" fill="#4a4afc"/><rect x="579" y="503" width="4" height="3" fill="#4a4afc"/><rect x="572" y="506" width="4" height="4" fill="#4a4afc"/><rect x="565" y="510" width="4" height="3" fill="#4a4afc"/><rect x="557" y="513" width="4" height="4" fill="#4a4afc"/><rect x="662" y="471" width="4" height="4" fill="#4a4afc"/><rect x="657" y="474" width="4" height="3" fill="#4a4afc"/><rect x="651" y="476" width="4" height="4" fill="#4a4afc"/><rect x="645" y="479" width="4" height="3" fill="#4a4afc"/><rect x="639" y="482" width="4" height="4" fill="#4a4afc"/><rect x="633" y="485" width="4" height="3" fill="#4a4afc"/><rect x="626" y="488" width="4" height="4" fill="#4a4afc"/><rect x="620" y="490" width="4" height="3" fill="#4a4afc"/><rect x="613" y="494" width="4" height="4" fill="#4a4afc"/><rect x="607" y="497" width="4" height="3" fill="#4a4afc"/><rect x="600" y="500" width="4" height="4" fill="#4a4afc"/><rect x="593" y="503" width="4" height="3" fill="#4a4afc"/><rect x="585" y="506" width="4" height="4" fill="#4a4afc"/><rect x="578" y="510" width="4" height="3" fill="#4a4afc"/><rect x="570" y="513" width="4" height="4" fill="#4a4afc"/><rect x="563" y="517" width="4" height="3" fill="#4a4afc"/><rect x="668" y="474" width="4" height="3" fill="#4a4afc"/><rect x="663" y="476" width="4" height="4" fill="#4a4afc"/><rect x="657" y="479" width="4" height="3" fill="#4a4afc"/><rect x="651" y="482" width="4" height="4" fill="#4a4afc"/><rect x="645" y="485" width="4" height="3" fill="#4a4afc"/><rect x="639" y="488" width="4" height="4" fill="#4a4afc"/><rect x="632" y="490" width="4" height="3" fill="#4a4afc"/><rect x="626" y="494" width="4" height="4" fill="#4a4afc"/><rect x="619" y="497" width="4" height="3" fill="#4a4afc"/><rect x="613" y="500" width="4" height="4" fill="#4a4afc"/><rect x="606" y="503" width="4" height="3" fill="#4a4afc"/><rect x="599" y="506" width="4" height="4" fill="#4a4afc"/><rect x="591" y="510" width="4" height="3" fill="#4a4afc"/><rect x="584" y="513" width="4" height="4" fill="#4a4afc"/><rect x="577" y="517" width="4" height="3" fill="#4a4afc"/><rect x="569" y="520" width="4" height="4" fill="#4a4afc"/><rect x="675" y="476" width="4" height="4" fill="#4a4afc"/><rect x="669" y="479" width="4" height="3" fill="#4a4afc"/><rect x="663" y="482" width="4" height="4" fill="#4a4afc"/><rect x="657" y="485" width="4" height="3" fill="#4a4afc"/><rect x="651" y="488" width="4" height="4" fill="#4a4afc"/><rect x="645" y="490" width="4" height="3" fill="#4a4afc"/><rect x="639" y="494" width="4" height="4" fill="#4a4afc"/><rect x="632" y="497" width="4" height="3" fill="#4a4afc"/><rect x="626" y="500" width="4" height="4" fill="#4a4afc"/><rect x="619" y="503" width="4" height="3" fill="#4a4afc"/><rect x="612" y="506" width="4" height="4" fill="#4a4afc"/><rect x="605" y="510" width="4" height="3" fill="#4a4afc"/><rect x="598" y="513" width="4" height="4" fill="#4a4afc"/><rect x="590" y="517" width="4" height="3" fill="#4a4afc"/><rect x="583" y="520" width="4" height="4" fill="#4a4afc"/><rect x="575" y="524" width="4" height="3" fill="#4a4afc"/><rect x="681" y="479" width="4" height="3" fill="#4a4afc"/><rect x="675" y="482" width="4" height="4" fill="#4a4afc"/><rect x="670" y="485" width="4" height="3" fill="#4a4afc"/><rect x="664" y="488" width="4" height="4" fill="#4a4afc"/><rect x="658" y="490" width="4" height="3" fill="#4a4afc"/><rect x="651" y="494" width="4" height="4" fill="#4a4afc"/><rect x="645" y="497" width="4" height="3" fill="#4a4afc"/><rect x="639" y="500" width="4" height="4" fill="#4a4afc"/><rect x="632" y="503" width="4" height="3" fill="#4a4afc"/><rect x="625" y="506" width="4" height="4" fill="#4a4afc"/><rect x="618" y="510" width="4" height="3" fill="#4a4afc"/><rect x="611" y="513" width="4" height="4" fill="#4a4afc"/><rect x="604" y="517" width="4" height="3" fill="#4a4afc"/><rect x="597" y="520" width="4" height="4" fill="#4a4afc"/><rect x="589" y="524" width="4" height="3" fill="#4a4afc"/><rect x="581" y="528" width="4" height="4" fill="#4a4afc"/><rect x="687" y="482" width="4" height="4" fill="#4a4afc"/><rect x="682" y="485" width="4" height="3" fill="#4a4afc"/><rect x="676" y="488" width="4" height="4" fill="#4a4afc"/><rect x="670" y="490" width="4" height="3" fill="#4a4afc"/><rect x="664" y="494" width="4" height="4" fill="#4a4afc"/><rect x="658" y="497" width="4" height="3" fill="#4a4afc"/><rect x="652" y="500" width="4" height="4" fill="#4a4afc"/><rect x="645" y="503" width="4" height="3" fill="#4a4afc"/><rect x="639" y="506" width="4" height="4" fill="#4a4afc"/><rect x="632" y="510" width="4" height="3" fill="#4a4afc"/><rect x="625" y="513" width="4" height="4" fill="#4a4afc"/><rect x="618" y="517" width="4" height="3" fill="#4a4afc"/><rect x="611" y="520" width="4" height="4" fill="#4a4afc"/><rect x="603" y="524" width="4" height="3" fill="#4a4afc"/><rect x="596" y="528" width="4" height="4" fill="#4a4afc"/><rect x="588" y="532" width="4" height="3" fill="#4a4afc"/><rect x="694" y="485" width="4" height="3" fill="#4a4afc"/><rect x="688" y="488" width="4" height="4" fill="#4a4afc"/><rect x="683" y="490" width="4" height="3" fill="#4a4afc"/><rect x="677" y="494" width="4" height="4" fill="#4a4afc"/><rect x="671" y="497" width="4" height="3" fill="#4a4afc"/><rect x="665" y="500" width="4" height="4" fill="#4a4afc"/><rect x="658" y="503" width="4" height="3" fill="#4a4afc"/><rect x="652" y="506" width="4" height="4" fill="#4a4afc"/><rect x="645" y="510" width="4" height="3" fill="#4a4afc"/><rect x="638" y="513" width="4" height="4" fill="#4a4afc"/><rect x="632" y="517" width="4" height="3" fill="#4a4afc"/><rect x="624" y="520" width="4" height="4" fill="#4a4afc"/><rect x="617" y="524" width="4" height="3" fill="#4a4afc"/><rect x="610" y="528" width="4" height="4" fill="#4a4afc"/><rect x="602" y="532" width="4" height="3" fill="#4a4afc"/><rect x="594" y="536" width="4" height="4" fill="#4a4afc"/><rect x="701" y="488" width="4" height="4" fill="#4a4afc"/><rect x="695" y="490" width="4" height="3" fill="#4a4afc"/><rect x="689" y="494" width="4" height="4" fill="#4a4afc"/><rect x="684" y="497" width="4" height="3" fill="#4a4afc"/><rect x="678" y="500" width="4" height="4" fill="#4a4afc"/><rect x="671" y="503" width="4" height="3" fill="#4a4afc"/><rect x="665" y="506" width="4" height="4" fill="#4a4afc"/><rect x="659" y="510" width="4" height="3" fill="#4a4afc"/><rect x="652" y="513" width="4" height="4" fill="#4a4afc"/><rect x="645" y="517" width="4" height="3" fill="#4a4afc"/><rect x="638" y="520" width="4" height="4" fill="#4a4afc"/><rect x="631" y="524" width="4" height="3" fill="#4a4afc"/><rect x="624" y="528" width="4" height="4" fill="#4a4afc"/><rect x="617" y="532" width="4" height="3" fill="#4a4afc"/><rect x="609" y="536" width="4" height="4" fill="#4a4afc"/><rect x="601" y="540" width="4" height="3" fill="#4a4afc"/><rect x="708" y="490" width="4" height="3" fill="#4a4afc"/><rect x="702" y="494" width="4" height="4" fill="#4a4afc"/><rect x="696" y="497" width="4" height="3" fill="#4a4afc"/><rect x="691" y="500" width="4" height="4" fill="#4a4afc"/><rect x="685" y="503" width="4" height="3" fill="#4a4afc"/><rect x="678" y="506" width="4" height="4" fill="#4a4afc"/><rect x="672" y="510" width="4" height="3" fill="#4a4afc"/><rect x="666" y="513" width="4" height="4" fill="#4a4afc"/><rect x="659" y="517" width="4" height="3" fill="#4a4afc"/><rect x="652" y="520" width="4" height="4" fill="#4a4afc"/><rect x="645" y="524" width="4" height="3" fill="#4a4afc"/><rect x="638" y="528" width="4" height="4" fill="#4a4afc"/><rect x="631" y="532" width="4" height="3" fill="#4a4afc"/><rect x="624" y="536" width="4" height="4" fill="#4a4afc"/><rect x="616" y="540" width="4" height="3" fill="#4a4afc"/><rect x="608" y="544" width="4" height="4" fill="#4a4afc"/><rect x="715" y="494" width="4" height="4" fill="#4a4afc"/><rect x="709" y="497" width="4" height="3" fill="#4a4afc"/><rect x="704" y="500" width="4" height="4" fill="#4a4afc"/><rect x="698" y="503" width="4" height="3" fill="#4a4afc"/><rect x="692" y="506" width="4" height="4" fill="#4a4afc"/><rect x="686" y="510" width="4" height="3" fill="#4a4afc"/><rect x="679" y="513" width="4" height="4" fill="#4a4afc"/><rect x="673" y="517" width="4" height="3" fill="#4a4afc"/><rect x="666" y="520" width="4" height="4" fill="#4a4afc"/><rect x="659" y="524" width="4" height="3" fill="#4a4afc"/><rect x="653" y="528" width="4" height="4" fill="#4a4afc"/><rect x="646" y="532" width="4" height="3" fill="#4a4afc"/><rect x="638" y="536" width="4" height="4" fill="#4a4afc"/><rect x="631" y="540" width="4" height="3" fill="#4a4afc"/><rect x="623" y="544" width="4" height="4" fill="#4a4afc"/><rect x="615" y="548" width="4" height="3" fill="#4a4afc"/><rect x="722" y="497" width="4" height="3" fill="#4a4afc"/><rect x="716" y="500" width="4" height="4" fill="#4a4afc"/><rect x="711" y="503" width="4" height="3" fill="#4a4afc"/><rect x="705" y="506" width="4" height="4" fill="#4a4afc"/><rect x="699" y="510" width="4" height="3" fill="#4a4afc"/><rect x="693" y="513" width="4" height="4" fill="#4a4afc"/><rect x="687" y="517" width="4" height="3" fill="#4a4afc"/><rect x="680" y="520" width="4" height="4" fill="#4a4afc"/><rect x="674" y="524" width="4" height="3" fill="#4a4afc"/><rect x="667" y="528" width="4" height="4" fill="#4a4afc"/><rect x="660" y="532" width="4" height="3" fill="#4a4afc"/><rect x="653" y="536" width="4" height="4" fill="#4a4afc"/><rect x="646" y="540" width="4" height="3" fill="#4a4afc"/><rect x="638" y="544" width="4" height="4" fill="#4a4afc"/><rect x="631" y="548" width="4" height="3" fill="#4a4afc"/><rect x="623" y="553" width="4" height="4" fill="#4a4afc"/><rect x="729" y="500" width="4" height="4" fill="#4a4afc"/><rect x="724" y="503" width="4" height="3" fill="#4a4afc"/><rect x="718" y="506" width="4" height="4" fill="#4a4afc"/><rect x="712" y="510" width="4" height="3" fill="#4a4afc"/><rect x="706" y="513" width="4" height="4" fill="#4a4afc"/><rect x="700" y="517" width="4" height="3" fill="#4a4afc"/><rect x="694" y="520" width="4" height="4" fill="#4a4afc"/><rect x="688" y="524" width="4" height="3" fill="#4a4afc"/><rect x="681" y="528" width="4" height="4" fill="#4a4afc"/><rect x="674" y="532" width="4" height="3" fill="#4a4afc"/><rect x="667" y="536" width="4" height="4" fill="#4a4afc"/><rect x="660" y="540" width="4" height="3" fill="#4a4afc"/><rect x="653" y="544" width="4" height="4" fill="#4a4afc"/><rect x="646" y="548" width="4" height="3" fill="#4a4afc"/><rect x="638" y="553" width="4" height="4" fill="#4a4afc"/><rect x="630" y="557" width="4" height="3" fill="#4a4afc"/><rect x="737" y="503" width="4" height="3" fill="#4a4afc"/><rect x="731" y="506" width="4" height="4" fill="#4a4afc"/><rect x="726" y="510" width="4" height="3" fill="#4a4afc"/><rect x="720" y="513" width="4" height="4" fill="#4a4afc"/><rect x="714" y="517" width="4" height="3" fill="#4a4afc"/><rect x="708" y="520" width="4" height="4" fill="#4a4afc"/><rect x="702" y="524" width="4" height="3" fill="#4a4afc"/><rect x="695" y="528" width="4" height="4" fill="#4a4afc"/><rect x="689" y="532" width="4" height="3" fill="#4a4afc"/><rect x="682" y="536" width="4" height="4" fill="#4a4afc"/><rect x="675" y="540" width="4" height="3" fill="#4a4afc"/><rect x="668" y="544" width="4" height="4" fill="#4a4afc"/><rect x="661" y="548" width="4" height="3" fill="#4a4afc"/><rect x="653" y="553" width="4" height="4" fill="#4a4afc"/><rect x="646" y="557" width="4" height="3" fill="#4a4afc"/><rect x="638" y="562" width="4" height="4" fill="#4a4afc"/><rect x="469" y="595" width="1" height="22" fill="#0000d8"/><path d="M470 616.5 L487 607.5" stroke="#e00000" stroke-width="1" shape-rendering="crispEdges"/><path d="M468.5 616.5 L453 608.5" stroke="#00a000" stroke-width="1" shape-rendering="crispEdges"/><text x="469.5" y="590" font-size="11" fill="#0000d8" stroke="#0000d8" stroke-width="0.35" font-family="Liberation Sans">z</text><text x="452.5" y="603" font-size="11" fill="#00a000" stroke="#00a000" stroke-width="0.35" font-family="Liberation Sans">y</text><text x="487.5" y="603" font-size="11" fill="#e00000" stroke="#e00000" stroke-width="0.35" font-family="Liberation Sans">x</text></svg>
<svg class="a" style="left:0;top:0" width="1024" height="768" viewBox="0 0 1024 768" font-family="Liberation Sans" ><defs>
<linearGradient id="gpipe" x1="0" y1="0" x2="1" y2="1"><stop offset="0" stop-color="#c0c8e8"/><stop offset="0.5" stop-color="#5060a0"/><stop offset="1" stop-color="#202848"/></linearGradient>
<radialGradient id="gstar"><stop offset="0" stop-color="#ffffff"/><stop offset="0.5" stop-color="#fffce0"/><stop offset="1" stop-color="#fff8c0" stop-opacity="0"/></radialGradient>
</defs><rect x="840" y="112" width="184" height="1" fill="#f0f0f0" shape-rendering="crispEdges"/><path d="M842.5 112 V90.5 Q842.5 88.5 844.5 88.5 H868.5 Q870.5 88.5 870.5 90.5 V112" fill="none" stroke="#e6e6e6" stroke-width="1"/><rect x="871" y="90" width="1" height="22" fill="#909090" shape-rendering="crispEdges"/><rect x="872" y="87" width="29" height="26" fill="#c5c5c5" shape-rendering="crispEdges"/><path d="M872.5 113 V89.5 Q872.5 87.5 874.5 87.5 H898.5 Q900.5 87.5 900.5 89.5 V113" fill="none" stroke="#f4f4f4" stroke-width="1"/><rect x="901" y="89" width="1" height="24" fill="#808080" shape-rendering="crispEdges"/><path d="M901.5 112 V90.5 Q901.5 88.5 903.5 88.5 H927.5 Q929.5 88.5 929.5 90.5 V112" fill="none" stroke="#e6e6e6" stroke-width="1"/><rect x="930" y="90" width="1" height="22" fill="#909090" shape-rendering="crispEdges"/><path d="M930.5 112 V90.5 Q930.5 88.5 932.5 88.5 H956.5 Q958.5 88.5 958.5 90.5 V112" fill="none" stroke="#e6e6e6" stroke-width="1"/><rect x="959" y="90" width="1" height="22" fill="#909090" shape-rendering="crispEdges"/><path d="M959.5 112 V90.5 Q959.5 88.5 961.5 88.5 H985.5 Q987.5 88.5 987.5 90.5 V112" fill="none" stroke="#e6e6e6" stroke-width="1"/><rect x="988" y="90" width="1" height="22" fill="#909090" shape-rendering="crispEdges"/><path d="M988.5 112 V90.5 Q988.5 88.5 990.5 88.5 H1013.5 Q1015.5 88.5 1015.5 90.5 V112" fill="none" stroke="#e6e6e6" stroke-width="1"/><rect x="1016" y="90" width="1" height="22" fill="#909090" shape-rendering="crispEdges"/><circle cx="851" cy="94.5" r="6.5" fill="url(#gstar)"/><path d="M851 87.5 L852 93.5 L858 94.5 L852 95.5 L851 101.5 L850 95.5 L844 94.5 L850 93.5 Z" fill="#ffffff"/><path d="M846.5 90 L851 94.5 L855.5 90 M846.5 99 L851 94.5 L855.5 99" stroke="#fffce8" stroke-width="1.2" fill="none"/><circle cx="851" cy="94.5" r="2.2" fill="#fff"/><path d="M855 97 L857.5 107 L859.5 104.5 L864 109 L865.5 107.5 L861 103 L864 101.5 Z" fill="#fff" stroke="#303030" stroke-width="0.8"/><path d="M878 108 A16 16 0 0 1 894 92 L894 100 A8 8 0 0 0 886 108 Z" fill="url(#gpipe)"/><path d="M879.5 108 A14.5 14.5 0 0 1 894 93.5" fill="none" stroke="#d0d8f8" stroke-width="1"/><path d="M883 108 A11 11 0 0 1 894 97" fill="none" stroke="#182040" stroke-width="1.4"/><rect x="877" y="91" width="1" height="1" fill="#000" shape-rendering="crispEdges"/><rect x="894" y="108" width="2" height="2" fill="#000" shape-rendering="crispEdges"/><rect x="877" y="91" width="18" height="0.5" fill="#a0a0a0" /><rect x="895" y="91" width="0.5" height="18" fill="#a0a0a0" /><rect x="911.5" y="90.5" width="7" height="7" fill="#e4e4f4" stroke="#4048a0" stroke-width="1.1"/><path d="M915 98 V102 M915 100 L907.5 104 M915 100 L922.5 104" stroke="#404040" stroke-width="1" fill="none"/><rect x="905.5" y="104.5" width="4" height="4" fill="#e4e4f4" stroke="#4048a0" stroke-width="1"/><rect x="913" y="104.5" width="4" height="4" fill="#e4e4f4" stroke="#4048a0" stroke-width="1"/><rect x="920.5" y="104.5" width="4" height="4" fill="#e4e4f4" stroke="#4048a0" stroke-width="1"/><circle cx="946" cy="100" r="7.2" fill="#e8e8e8" stroke="#181818" stroke-width="2"/><circle cx="946" cy="100" r="4" fill="none" stroke="#606060" stroke-width="0.8"/><path d="M946 94 V106 M940 100 H952 M942 96 L950 104 M950 96 L942 104" stroke="#707070" stroke-width="0.6"/><circle cx="946" cy="100" r="1.4" fill="#e02020"/><path d="M937 93 A9 9 0 0 0 937 107 M935 95 A8 8 0 0 0 935 105" fill="none" stroke="#707070" stroke-width="0.8"/><rect x="963.5" y="91.5" width="19" height="14" rx="1.5" fill="#ffffff" stroke="#181818" stroke-width="2"/><path d="M968 93.5 h3 v8 h-3 z" fill="#3048c0"/><path d="M973 102 L976 94 L979.5 102 Z" fill="#e02020"/><path d="M969 107 h8 v1.5 h3 v1.5 h-14 v-1.5 h3 z" fill="#303030"/><rect x="972" y="107.5" width="2" height="1" fill="#20c020"/><path d="M994 92 Q996 90 1000 91 L1006 91 Q1009 91.5 1010 95 L1007 93.5 L1004 94 L1004 96 L999.5 96 L999.5 93.5 L996 93.5 Z" fill="#404040"/><rect x="1000" y="96" width="3.2" height="7" fill="#d03020"/><rect x="999.6" y="103" width="4" height="7" fill="#202020"/><rect x="848" y="118" width="147" height="20" fill="#f8f8f8" shape-rendering="crispEdges"/><rect x="848" y="118" width="146" height="19" fill="#000000" shape-rendering="crispEdges"/><rect x="850" y="120" width="144" height="17" fill="#e0e0e0" shape-rendering="crispEdges"/><rect x="849" y="119" width="145" height="1" fill="#505050" shape-rendering="crispEdges"/><rect x="850" y="136" width="144" height="1" fill="#d4d4d4" shape-rendering="crispEdges"/><rect x="993" y="120" width="1" height="17" fill="#d4d4d4" shape-rendering="crispEdges"/><text x="853" y="132" font-size="12" fill="#000" stroke="#000" stroke-width="0.15" textLength="40.8" lengthAdjust="spacingAndGlyphs" >TestMap</text><rect x="998" y="118" width="17" height="20" fill="#f4f4f4" shape-rendering="crispEdges"/><rect x="998" y="118" width="16" height="19" fill="#404040" shape-rendering="crispEdges"/><rect x="999" y="119" width="15" height="18" fill="#1ba751" shape-rendering="crispEdges"/><rect x="849" y="143" width="167" height="24" fill="#f8f8f8" shape-rendering="crispEdges"/><rect x="849" y="143" width="166" height="23" fill="#5c6670" shape-rendering="crispEdges"/><rect x="851" y="145" width="164" height="21" fill="#e0e0e0" shape-rendering="crispEdges"/><rect x="850" y="144" width="165" height="1" fill="#5c6670" shape-rendering="crispEdges"/><rect x="851" y="165" width="164" height="1" fill="#d4d4d4" shape-rendering="crispEdges"/><rect x="1014" y="145" width="1" height="21" fill="#d4d4d4" shape-rendering="crispEdges"/><text x="853" y="159" font-size="12" fill="#000" stroke="#000" stroke-width="0.15" textLength="58.2" lengthAdjust="spacingAndGlyphs" >Modifier List</text><rect x="998" y="145" width="17" height="20" fill="#ece9d8" shape-rendering="crispEdges"/><rect x="998" y="145" width="17" height="1" fill="#ffffff" shape-rendering="crispEdges"/><rect x="998" y="145" width="1" height="20" fill="#ffffff" shape-rendering="crispEdges"/><rect x="998" y="164" width="17" height="1" fill="#716f64" shape-rendering="crispEdges"/><rect x="1014" y="145" width="1" height="20" fill="#716f64" shape-rendering="crispEdges"/><rect x="999" y="163" width="15" height="1" fill="#aca899" shape-rendering="crispEdges"/><rect x="1013" y="146" width="1" height="18" fill="#aca899" shape-rendering="crispEdges"/><rect x="1003" y="154" width="7" height="1" fill="#000" shape-rendering="crispEdges"/><rect x="1004" y="155" width="5" height="1" fill="#000" shape-rendering="crispEdges"/><rect x="1005" y="156" width="3" height="1" fill="#000" shape-rendering="crispEdges"/><rect x="1006" y="157" width="1" height="1" fill="#000" shape-rendering="crispEdges"/><rect x="858" y="174" width="72" height="20" fill="#c5c5c5" shape-rendering="crispEdges"/><rect x="858" y="174" width="72" height="1" fill="#ececec" shape-rendering="crispEdges"/><rect x="858" y="174" width="1" height="20" fill="#ececec" shape-rendering="crispEdges"/><rect x="858" y="193" width="72" height="1" fill="#6e6e6e" shape-rendering="crispEdges"/><rect x="929" y="174" width="1" height="20" fill="#6e6e6e" shape-rendering="crispEdges"/><text x="864.3" y="188" font-size="12" fill="#000" stroke="#000" stroke-width="0.15" textLength="59.4" lengthAdjust="spacingAndGlyphs" >Mesh Select</text><rect x="933" y="174" width="72" height="20" fill="#c5c5c5" shape-rendering="crispEdges"/><rect x="933" y="174" width="72" height="1" fill="#ececec" shape-rendering="crispEdges"/><rect x="933" y="174" width="1" height="20" fill="#ececec" shape-rendering="crispEdges"/><rect x="933" y="193" width="72" height="1" fill="#6e6e6e" shape-rendering="crispEdges"/><rect x="1004" y="174" width="1" height="20" fill="#6e6e6e" shape-rendering="crispEdges"/><text x="938.7" y="188" font-size="12" fill="#000" stroke="#000" stroke-width="0.15" textLength="60.6" lengthAdjust="spacingAndGlyphs" >Patch Select</text><rect x="858" y="197" width="72" height="20" fill="#c5c5c5" shape-rendering="crispEdges"/><rect x="858" y="197" width="72" height="1" fill="#ececec" shape-rendering="crispEdges"/><rect x="858" y="197" width="1" height="20" fill="#ececec" shape-rendering="crispEdges"/><rect x="858" y="216" width="72" height="1" fill="#6e6e6e" shape-rendering="crispEdges"/><rect x="929" y="197" width="1" height="20" fill="#6e6e6e" shape-rendering="crispEdges"/><text x="864.0" y="211" font-size="12" fill="#808080" stroke="#808080" stroke-width="0.15" textLength="60.0" lengthAdjust="spacingAndGlyphs" >SplineSelect</text><rect x="933" y="197" width="72" height="20" fill="#c5c5c5" shape-rendering="crispEdges"/><rect x="933" y="197" width="72" height="1" fill="#ececec" shape-rendering="crispEdges"/><rect x="933" y="197" width="1" height="20" fill="#ececec" shape-rendering="crispEdges"/><rect x="933" y="216" width="72" height="1" fill="#6e6e6e" shape-rendering="crispEdges"/><rect x="1004" y="197" width="1" height="20" fill="#6e6e6e" shape-rendering="crispEdges"/><text x="942.0" y="211" font-size="12" fill="#000" stroke="#000" stroke-width="0.15" textLength="54.0" lengthAdjust="spacingAndGlyphs" >Poly Select</text><rect x="858" y="219" width="72" height="20" fill="#c5c5c5" shape-rendering="crispEdges"/><rect x="858" y="219" width="72" height="1" fill="#ececec" shape-rendering="crispEdges"/><rect x="858" y="219" width="1" height="20" fill="#ececec" shape-rendering="crispEdges"/><rect x="858" y="238" width="72" height="1" fill="#6e6e6e" shape-rendering="crispEdges"/><rect x="929" y="219" width="1" height="20" fill="#6e6e6e" shape-rendering="crispEdges"/><text x="868.5" y="233" font-size="12" fill="#000" stroke="#000" stroke-width="0.15" textLength="51.0" lengthAdjust="spacingAndGlyphs" >Vol. Select</text><rect x="933" y="219" width="72" height="20" fill="#c5c5c5" shape-rendering="crispEdges"/><rect x="933" y="219" width="72" height="1" fill="#ececec" shape-rendering="crispEdges"/><rect x="933" y="219" width="1" height="20" fill="#ececec" shape-rendering="crispEdges"/><rect x="933" y="238" width="72" height="1" fill="#6e6e6e" shape-rendering="crispEdges"/><rect x="1004" y="219" width="1" height="20" fill="#6e6e6e" shape-rendering="crispEdges"/><text x="942.0" y="233" font-size="12" fill="#808080" stroke="#808080" stroke-width="0.15" textLength="54.0" lengthAdjust="spacingAndGlyphs" >FFD Select</text><rect x="858" y="242" width="72" height="20" fill="#c5c5c5" shape-rendering="crispEdges"/><rect x="858" y="242" width="72" height="1" fill="#ececec" shape-rendering="crispEdges"/><rect x="858" y="242" width="1" height="20" fill="#ececec" shape-rendering="crispEdges"/><rect x="858" y="261" width="72" height="1" fill="#6e6e6e" shape-rendering="crispEdges"/><rect x="929" y="242" width="1" height="20" fill="#6e6e6e" shape-rendering="crispEdges"/><rect x="933" y="242" width="72" height="20" fill="#c5c5c5" shape-rendering="crispEdges"/><rect x="933" y="242" width="72" height="1" fill="#ececec" shape-rendering="crispEdges"/><rect x="933" y="242" width="1" height="20" fill="#ececec" shape-rendering="crispEdges"/><rect x="933" y="261" width="72" height="1" fill="#6e6e6e" shape-rendering="crispEdges"/><rect x="1004" y="242" width="1" height="20" fill="#6e6e6e" shape-rendering="crispEdges"/><text x="945.9" y="256" font-size="12" fill="#808080" stroke="#808080" stroke-width="0.15" textLength="46.2" lengthAdjust="spacingAndGlyphs" >NSurf Sel</text><rect x="849" y="270" width="165" height="128" fill="#ffffff" shape-rendering="crispEdges"/><rect x="849" y="270" width="164" height="127" fill="#aca899" shape-rendering="crispEdges"/><rect x="850" y="271" width="163" height="126" fill="#ffffff" shape-rendering="crispEdges"/><rect x="850" y="271" width="162" height="125" fill="#716f64" shape-rendering="crispEdges"/><rect x="851" y="272" width="161" height="124" fill="#e0e0e0" shape-rendering="crispEdges"/><rect x="851" y="272" width="161" height="15" fill="#ffe900" shape-rendering="crispEdges"/><rect x="851" y="287" width="161" height="1" fill="#80806a" shape-rendering="crispEdges"/><rect x="857" y="275" width="9" height="9" fill="#000" shape-rendering="crispEdges"/><rect x="859" y="279" width="5" height="1" fill="#ffe900" shape-rendering="crispEdges"/><rect x="861" y="277" width="1" height="5" fill="#ffe900" shape-rendering="crispEdges"/><text x="873.5" y="284" font-size="12" fill="#000" stroke="#000" stroke-width="0.15" textLength="66.5" lengthAdjust="spacingAndGlyphs" >Editable Mesh</text><rect x="1004" y="273" width="3" height="1" fill="#000" shape-rendering="crispEdges"/><rect x="1005" y="272" width="1" height="3" fill="#000" shape-rendering="crispEdges"/><rect x="993" y="280" width="3" height="1" fill="#000" shape-rendering="crispEdges"/><rect x="994" y="279" width="1" height="3" fill="#000" shape-rendering="crispEdges"/><rect x="999" y="284" width="3" height="1" fill="#000" shape-rendering="crispEdges"/><rect x="1000" y="283" width="1" height="3" fill="#000" shape-rendering="crispEdges"/><rect x="882" y="404" width="1" height="16" fill="#808080" shape-rendering="crispEdges"/><rect x="883" y="404" width="1" height="16" fill="#e8e8e8" shape-rendering="crispEdges"/><rect x="918" y="404" width="1" height="16" fill="#808080" shape-rendering="crispEdges"/><rect x="919" y="404" width="1" height="16" fill="#e8e8e8" shape-rendering="crispEdges"/><rect x="978" y="404" width="1" height="16" fill="#808080" shape-rendering="crispEdges"/><rect x="979" y="404" width="1" height="16" fill="#e8e8e8" shape-rendering="crispEdges"/><path d="M856 412.5 H863" stroke="#000" stroke-width="1.2"/><path d="M863 408 V417 M870.5 407 V418" stroke="#000" stroke-width="1.4"/><path d="M863.5 409.5 L870 408 V417 L863.5 415.5 Z" fill="#d8d8d8" stroke="#000" stroke-width="1"/><rect x="897.5" y="406" width="5.5" height="13" fill="#ffffff" stroke="#000" stroke-width="1.2"/><rect x="898" y="406" width="4.5" height="5" fill="#909090"/><path d="M896.5 405.5 L898.5 408 M904 405.5 L902 408" stroke="#000" stroke-width="1"/><path d="M929.5 406.5 L936.5 418 L943.5 406.5" fill="none" stroke="#a0a0a0" stroke-width="1.2"/><circle cx="936.5" cy="416" r="2" fill="none" stroke="#a0a0a0" stroke-width="0.8"/><path d="M930.5 407 L937.5 419 L944.5 407" fill="none" stroke="#ffffff" stroke-width="0.6" opacity="0.8"/><path d="M956 411 h8 v6 q0 2 -2 2 h-4 q-2 0 -2 -2 z" fill="none" stroke="#a0a0a0" stroke-width="1.1"/><path d="M957 410 q0 -3 3.5 -3.5 q3.5 0 3 3.5 M955 413.5 h9.5" fill="none" stroke="#a0a0a0" stroke-width="1"/><rect x="989" y="406" width="12" height="13" fill="#ffffff" shape-rendering="crispEdges"/><rect x="989" y="406" width="12" height="3" fill="#1020a0" shape-rendering="crispEdges"/><rect x="989" y="406" width="1" height="13" fill="#1020a0" shape-rendering="crispEdges"/><rect x="992" y="411" width="3" height="2" fill="#303030" shape-rendering="crispEdges"/><rect x="996" y="411" width="3" height="2" fill="#303030" shape-rendering="crispEdges"/><rect x="1000" y="411" width="3" height="2" fill="#303030" shape-rendering="crispEdges"/><rect x="992" y="414" width="3" height="2" fill="#303030" shape-rendering="crispEdges"/><rect x="996" y="414" width="3" height="2" fill="#303030" shape-rendering="crispEdges"/><rect x="1000" y="414" width="3" height="2" fill="#303030" shape-rendering="crispEdges"/><rect x="992" y="417" width="3" height="2" fill="#303030" shape-rendering="crispEdges"/><rect x="996" y="417" width="3" height="2" fill="#303030" shape-rendering="crispEdges"/><rect x="1000" y="417" width="3" height="2" fill="#303030" shape-rendering="crispEdges"/><rect x="997" y="411" width="7" height="9" fill="#ffffff" shape-rendering="crispEdges"/><rect x="998" y="412" width="2" height="2" fill="#303030" shape-rendering="crispEdges"/><rect x="1001" y="412" width="2" height="2" fill="#303030" shape-rendering="crispEdges"/><rect x="998" y="415" width="2" height="2" fill="#303030" shape-rendering="crispEdges"/><rect x="1001" y="415" width="2" height="2" fill="#303030" shape-rendering="crispEdges"/><rect x="998" y="418" width="2" height="2" fill="#303030" shape-rendering="crispEdges"/><rect x="1001" y="418" width="2" height="2" fill="#303030" shape-rendering="crispEdges"/><rect x="844" y="434" width="175" height="2" fill="#e6e6e6" shape-rendering="crispEdges"/><rect x="844" y="436" width="1" height="2" fill="#e6e6e6" shape-rendering="crispEdges"/><rect x="845" y="436" width="174" height="1" fill="#000" shape-rendering="crispEdges"/><rect x="845" y="437" width="174" height="1" fill="#808080" shape-rendering="crispEdges"/><rect x="844" y="445" width="175" height="1" fill="#808080" shape-rendering="crispEdges"/><rect x="844" y="445" width="1" height="237" fill="#808080" shape-rendering="crispEdges"/><rect x="845" y="446" width="169" height="1" fill="#dcdcdc" shape-rendering="crispEdges"/><rect x="845" y="446" width="1" height="235" fill="#dcdcdc" shape-rendering="crispEdges"/><rect x="845" y="681" width="174" height="1" fill="#f4f4f4" shape-rendering="crispEdges"/><rect x="1018" y="445" width="1" height="237" fill="#f4f4f4" shape-rendering="crispEdges"/><rect x="1013" y="446" width="1" height="235" fill="#d8d8d8" shape-rendering="crispEdges"/><rect x="1014" y="446" width="4" height="50" fill="#707070" shape-rendering="crispEdges"/><rect x="1014" y="496" width="4" height="185" fill="#000" shape-rendering="crispEdges"/><rect x="847" y="457" width="1" height="224" fill="#808080" shape-rendering="crispEdges"/><rect x="848" y="458" width="1" height="223" fill="#f4f4f4" shape-rendering="crispEdges"/><rect x="1010" y="457" width="1" height="224" fill="#808080" shape-rendering="crispEdges"/><rect x="1011" y="458" width="1" height="223" fill="#f4f4f4" shape-rendering="crispEdges"/><rect x="847" y="457" width="4" height="1" fill="#808080" shape-rendering="crispEdges"/><rect x="1009" y="457" width="2" height="1" fill="#808080" shape-rendering="crispEdges"/><rect x="848" y="680" width="163" height="1" fill="#f4f4f4" shape-rendering="crispEdges"/><rect x="850" y="448" width="159" height="1" fill="#e8e8e8" shape-rendering="crispEdges"/><rect x="850" y="448" width="1" height="17" fill="#e8e8e8" shape-rendering="crispEdges"/><rect x="851" y="449" width="158" height="16" fill="#000" shape-rendering="crispEdges"/><rect x="852" y="450" width="156" height="14" fill="#d0d0d0" shape-rendering="crispEdges"/><rect x="853" y="451" width="154" height="13" fill="#b3b3b3" shape-rendering="crispEdges"/><rect x="856" y="457" width="3" height="1" fill="#000" shape-rendering="crispEdges"/><text x="908.5" y="461" font-size="12" fill="#000" stroke="#000" stroke-width="0.15" textLength="44" lengthAdjust="spacingAndGlyphs" >Selection</text><rect x="867" y="473" width="24" height="23" fill="#f0f0f0" shape-rendering="crispEdges"/><rect x="867" y="473" width="23" height="22" fill="#808080" shape-rendering="crispEdges"/><rect x="868" y="474" width="22" height="21" fill="#ffff00" shape-rendering="crispEdges"/><rect x="884" y="479" width="3" height="1" fill="#ff0000" shape-rendering="crispEdges"/><rect x="885" y="478" width="1" height="3" fill="#ff0000" shape-rendering="crispEdges"/><rect x="873" y="486" width="3" height="1" fill="#ff0000" shape-rendering="crispEdges"/><rect x="874" y="485" width="1" height="3" fill="#ff0000" shape-rendering="crispEdges"/><rect x="879" y="490" width="3" height="1" fill="#ff0000" shape-rendering="crispEdges"/><rect x="880" y="489" width="1" height="3" fill="#ff0000" shape-rendering="crispEdges"/><path d="M896.5 485 L910 478.5 L904.5 489.5 Z" fill="none" stroke="#ff0000" stroke-width="1" shape-rendering="crispEdges"/><path d="M920.5 485 L934.5 478.2 L928.5 489.5 Z" fill="#ff0000" stroke="#000" stroke-width="1" stroke-linejoin="round"/><rect x="945" y="478" width="12" height="12" fill="#000" shape-rendering="crispEdges"/><rect x="946" y="479" width="10" height="10" fill="#ff0000" shape-rendering="crispEdges"/><path d="M968.5 481.5 L972 478.5 H981 V486 L977.5 489.5 H968.5 Z" fill="#ff0000" stroke="#000" stroke-width="1" shape-rendering="crispEdges"/><path d="M977.5 481.5 L981 478.5 V486 L977.5 489.5 Z" fill="#8020a0"/><path d="M968.5 481.5 H977.5 V489.5 M977.5 481.5 L981 478.5" fill="none" stroke="#000" stroke-width="1" shape-rendering="crispEdges"/><rect x="858" y="503" width="13" height="13" fill="#f4f4f4" shape-rendering="crispEdges"/><rect x="858" y="503" width="12" height="12" fill="#5c6670" shape-rendering="crispEdges"/><rect x="859" y="504" width="11" height="11" fill="#8a9098" shape-rendering="crispEdges"/><rect x="860" y="505" width="10" height="10" fill="#d0d0d0" shape-rendering="crispEdges"/><rect x="860" y="514" width="10" height="1" fill="#f0f0f0" shape-rendering="crispEdges"/><rect x="869" y="505" width="1" height="10" fill="#f0f0f0" shape-rendering="crispEdges"/><text x="877" y="513.5" font-size="12" fill="#808080" stroke="#808080" stroke-width="0.15" textLength="44" lengthAdjust="spacingAndGlyphs" >By Vertex</text><rect x="858" y="523" width="13" height="13" fill="#f4f4f4" shape-rendering="crispEdges"/><rect x="858" y="523" width="12" height="12" fill="#5c6670" shape-rendering="crispEdges"/><rect x="859" y="524" width="11" height="11" fill="#8a9098" shape-rendering="crispEdges"/><rect x="860" y="525" width="10" height="10" fill="#e0e0e0" shape-rendering="crispEdges"/><rect x="860" y="534" width="10" height="1" fill="#f0f0f0" shape-rendering="crispEdges"/><rect x="869" y="525" width="1" height="10" fill="#f0f0f0" shape-rendering="crispEdges"/><text x="877" y="533.5" font-size="12" fill="#000" stroke="#000" stroke-width="0.15" textLength="86" lengthAdjust="spacingAndGlyphs" >Ignore Backfacing</text><rect x="858" y="542" width="13" height="13" fill="#f4f4f4" shape-rendering="crispEdges"/><rect x="858" y="542" width="12" height="12" fill="#5c6670" shape-rendering="crispEdges"/><rect x="859" y="543" width="11" height="11" fill="#8a9098" shape-rendering="crispEdges"/><rect x="860" y="544" width="10" height="10" fill="#d0d0d0" shape-rendering="crispEdges"/><rect x="860" y="553" width="10" height="1" fill="#f0f0f0" shape-rendering="crispEdges"/><rect x="869" y="544" width="1" height="10" fill="#f0f0f0" shape-rendering="crispEdges"/><text x="877" y="552.5" font-size="12" fill="#808080" stroke="#808080" stroke-width="0.15" textLength="95" lengthAdjust="spacingAndGlyphs" >Ignore Visible Edges</text><text x="870" y="571" font-size="12" fill="#808080" stroke="#808080" stroke-width="0.15" textLength="67" lengthAdjust="spacingAndGlyphs" >Planar Thresh:</text><rect x="939" y="559" width="45" height="16" fill="#f8f8f8" shape-rendering="crispEdges"/><rect x="939" y="559" width="44" height="15" fill="#000000" shape-rendering="crispEdges"/><rect x="941" y="561" width="42" height="13" fill="#e0e0e0" shape-rendering="crispEdges"/><rect x="940" y="560" width="43" height="1" fill="#505050" shape-rendering="crispEdges"/><rect x="941" y="573" width="42" height="1" fill="#d4d4d4" shape-rendering="crispEdges"/><rect x="982" y="561" width="1" height="13" fill="#d4d4d4" shape-rendering="crispEdges"/><text x="944" y="571" font-size="12" fill="#808080" stroke="#808080" stroke-width="0.15" textLength="21.0" lengthAdjust="spacingAndGlyphs" >45,0</text><rect x="987" y="559" width="11" height="16" fill="#c5c5c5" shape-rendering="crispEdges"/><rect x="987" y="559" width="11" height="1" fill="#f4f4f4" shape-rendering="crispEdges"/><rect x="987" y="559" width="1" height="16" fill="#f4f4f4" shape-rendering="crispEdges"/><rect x="987" y="574" width="11" height="1" fill="#6a6a6a" shape-rendering="crispEdges"/><rect x="997" y="559" width="1" height="16" fill="#6a6a6a" shape-rendering="crispEdges"/><path d="M990.0 565.0 h5 l-2.5 -3 z M990.0 569.0 h5 l-2.5 3 z" fill="#000"/><rect x="858" y="581" width="13" height="13" fill="#f4f4f4" shape-rendering="crispEdges"/><rect x="858" y="581" width="12" height="12" fill="#5c6670" shape-rendering="crispEdges"/><rect x="859" y="582" width="11" height="11" fill="#8a9098" shape-rendering="crispEdges"/><rect x="860" y="583" width="10" height="10" fill="#e0e0e0" shape-rendering="crispEdges"/><rect x="860" y="592" width="10" height="1" fill="#f0f0f0" shape-rendering="crispEdges"/><rect x="869" y="583" width="1" height="10" fill="#f0f0f0" shape-rendering="crispEdges"/><text x="877" y="591.5" font-size="12" fill="#000" stroke="#000" stroke-width="0.15" textLength="67" lengthAdjust="spacingAndGlyphs" >Show Normals</text><text x="908.5" y="608.5" font-size="12" fill="#000" stroke="#000" stroke-width="0.15" textLength="28.5" lengthAdjust="spacingAndGlyphs" >Scale:</text><rect x="939" y="597" width="45" height="16" fill="#f8f8f8" shape-rendering="crispEdges"/><rect x="939" y="597" width="44" height="15" fill="#000000" shape-rendering="crispEdges"/><rect x="941" y="599" width="42" height="13" fill="#e0e0e0" shape-rendering="crispEdges"/><rect x="940" y="598" width="43" height="1" fill="#505050" shape-rendering="crispEdges"/><rect x="941" y="611" width="42" height="1" fill="#d4d4d4" shape-rendering="crispEdges"/><rect x="982" y="599" width="1" height="13" fill="#d4d4d4" shape-rendering="crispEdges"/><text x="944" y="609" font-size="12" fill="#000" stroke="#000" stroke-width="0.15" textLength="21.0" lengthAdjust="spacingAndGlyphs" >20,0</text><rect x="987" y="597" width="11" height="16" fill="#c5c5c5" shape-rendering="crispEdges"/><rect x="987" y="597" width="11" height="1" fill="#f4f4f4" shape-rendering="crispEdges"/><rect x="987" y="597" width="1" height="16" fill="#f4f4f4" shape-rendering="crispEdges"/><rect x="987" y="612" width="11" height="1" fill="#6a6a6a" shape-rendering="crispEdges"/><rect x="997" y="597" width="1" height="16" fill="#6a6a6a" shape-rendering="crispEdges"/><path d="M990.0 603.0 h5 l-2.5 -3 z M990.0 607.0 h5 l-2.5 3 z" fill="#000"/><rect x="855" y="618" width="72" height="18" fill="#c5c5c5" shape-rendering="crispEdges"/><rect x="855" y="618" width="72" height="1" fill="#ececec" shape-rendering="crispEdges"/><rect x="855" y="618" width="1" height="18" fill="#ececec" shape-rendering="crispEdges"/><rect x="855" y="635" width="72" height="1" fill="#6e6e6e" shape-rendering="crispEdges"/><rect x="926" y="618" width="1" height="18" fill="#6e6e6e" shape-rendering="crispEdges"/><text x="879.9" y="631" font-size="12" fill="#000" stroke="#000" stroke-width="0.15" textLength="22.2" lengthAdjust="spacingAndGlyphs" >Hide</text><rect x="932" y="618" width="72" height="18" fill="#c5c5c5" shape-rendering="crispEdges"/><rect x="932" y="618" width="72" height="1" fill="#ececec" shape-rendering="crispEdges"/><rect x="932" y="618" width="1" height="18" fill="#ececec" shape-rendering="crispEdges"/><rect x="932" y="635" width="72" height="1" fill="#6e6e6e" shape-rendering="crispEdges"/><rect x="1003" y="618" width="1" height="18" fill="#6e6e6e" shape-rendering="crispEdges"/><text x="943.7" y="631" font-size="12" fill="#000" stroke="#000" stroke-width="0.15" textLength="48.6" lengthAdjust="spacingAndGlyphs" >Unhide All</text><text x="858.5" y="649.5" font-size="12" fill="#000" stroke="#000" stroke-width="0.15" textLength="88" lengthAdjust="spacingAndGlyphs" >Named Selections:</text><rect x="855" y="657" width="72" height="18" fill="#c5c5c5" shape-rendering="crispEdges"/><rect x="855" y="657" width="72" height="1" fill="#ececec" shape-rendering="crispEdges"/><rect x="855" y="657" width="1" height="18" fill="#ececec" shape-rendering="crispEdges"/><rect x="855" y="674" width="72" height="1" fill="#6e6e6e" shape-rendering="crispEdges"/><rect x="926" y="657" width="1" height="18" fill="#6e6e6e" shape-rendering="crispEdges"/><text x="878.4" y="670" font-size="12" fill="#000" stroke="#000" stroke-width="0.15" textLength="25.2" lengthAdjust="spacingAndGlyphs" >Copy</text><rect x="932" y="657" width="72" height="18" fill="#c5c5c5" shape-rendering="crispEdges"/><rect x="932" y="657" width="72" height="1" fill="#ececec" shape-rendering="crispEdges"/><rect x="932" y="657" width="1" height="18" fill="#ececec" shape-rendering="crispEdges"/><rect x="932" y="674" width="72" height="1" fill="#6e6e6e" shape-rendering="crispEdges"/><rect x="1003" y="657" width="1" height="18" fill="#6e6e6e" shape-rendering="crispEdges"/><text x="954.2" y="670" font-size="12" fill="#808080" stroke="#808080" stroke-width="0.15" textLength="27.6" lengthAdjust="spacingAndGlyphs" >Paste</text><ellipse cx="925.5" cy="481.5" rx="91.5" ry="35" fill="none" stroke="#ff0000" stroke-width="1" shape-rendering="crispEdges"/><rect x="840" y="687" width="184" height="1" fill="#6e6e6e" shape-rendering="crispEdges"/></svg>
<svg class="a" style="left:0;top:0" width="1024" height="768" viewBox="0 0 1024 768" font-family="Liberation Sans" ><rect x="41" y="643" width="15" height="17" fill="#c5c5c5" shape-rendering="crispEdges"/><rect x="41" y="643" width="15" height="1" fill="#ececec" shape-rendering="crispEdges"/><rect x="41" y="643" width="1" height="17" fill="#ececec" shape-rendering="crispEdges"/><rect x="41" y="659" width="15" height="1" fill="#6e6e6e" shape-rendering="crispEdges"/><rect x="55" y="643" width="1" height="17" fill="#6e6e6e" shape-rendering="crispEdges"/><path d="M49.5 647.5 L45.5 651.5 L49.5 655.5" fill="none" stroke="#000" stroke-width="1"/><rect x="57" y="643" width="124" height="17" fill="#c5c5c5" shape-rendering="crispEdges"/><rect x="57" y="643" width="124" height="1" fill="#f4f4f4" shape-rendering="crispEdges"/><rect x="57" y="643" width="1" height="16" fill="#f4f4f4" shape-rendering="crispEdges"/><rect x="58" y="658" width="122" height="1" fill="#808080" shape-rendering="crispEdges"/><rect x="57" y="659" width="124" height="1" fill="#000" shape-rendering="crispEdges"/><rect x="180" y="643" width="1" height="17" fill="#000" shape-rendering="crispEdges"/><rect x="179" y="644" width="1" height="15" fill="#808080" shape-rendering="crispEdges"/><text x="101.0" y="656" font-size="12" fill="#000" stroke="#000" stroke-width="0.15" textLength="35" lengthAdjust="spacingAndGlyphs" >0 / 100</text><rect x="182" y="643" width="15" height="17" fill="#c5c5c5" shape-rendering="crispEdges"/><rect x="182" y="643" width="15" height="1" fill="#ececec" shape-rendering="crispEdges"/><rect x="182" y="643" width="1" height="17" fill="#ececec" shape-rendering="crispEdges"/><rect x="182" y="659" width="15" height="1" fill="#6e6e6e" shape-rendering="crispEdges"/><rect x="196" y="643" width="1" height="17" fill="#6e6e6e" shape-rendering="crispEdges"/><path d="M187.5 647.5 L191.5 651.5 L187.5 655.5" fill="none" stroke="#000" stroke-width="1"/><rect x="40" y="661" width="800" height="1" fill="#f0f0f0" shape-rendering="crispEdges"/><rect x="40" y="662" width="800" height="1" fill="#707070" shape-rendering="crispEdges"/><rect x="53.5" y="667.5" width="16" height="5" fill="none" stroke="#000" stroke-width="1.4"/><path d="M55 670.5 q2.5 -2.5 5 0 t5 0 h3" fill="none" stroke="#000" stroke-width="0.9"/><rect x="53.5" y="679.5" width="16" height="3" fill="#fff" stroke="#000" stroke-width="1.2"/><path d="M57.5 678 V674 M55.5 675.5 L57.5 673.5 L59.5 675.5 M65.5 673.5 V678 M63.5 676 L65.5 678 L67.5 676" fill="none" stroke="#000" stroke-width="1"/><rect x="89" y="663" width="9" height="25" fill="#5c7494" shape-rendering="crispEdges"/><rect x="90" y="664" width="7" height="23" fill="#7c9cc8" shape-rendering="crispEdges"/><rect x="93" y="664" width="1" height="23" fill="#54709c" shape-rendering="crispEdges"/><rect x="93" y="663" width="1" height="25" fill="#808080" shape-rendering="crispEdges"/><rect x="100" y="663" width="1" height="11" fill="#808080" shape-rendering="crispEdges"/><rect x="107" y="663" width="1" height="11" fill="#808080" shape-rendering="crispEdges"/><rect x="114" y="663" width="1" height="11" fill="#808080" shape-rendering="crispEdges"/><rect x="121" y="663" width="1" height="11" fill="#808080" shape-rendering="crispEdges"/><rect x="128" y="663" width="1" height="11" fill="#808080" shape-rendering="crispEdges"/><rect x="134" y="663" width="1" height="11" fill="#808080" shape-rendering="crispEdges"/><rect x="141" y="663" width="1" height="11" fill="#808080" shape-rendering="crispEdges"/><rect x="148" y="663" width="1" height="11" fill="#808080" shape-rendering="crispEdges"/><rect x="155" y="663" width="1" height="11" fill="#808080" shape-rendering="crispEdges"/><rect x="162" y="663" width="1" height="25" fill="#808080" shape-rendering="crispEdges"/><rect x="169" y="663" width="1" height="11" fill="#808080" shape-rendering="crispEdges"/><rect x="176" y="663" width="1" height="11" fill="#808080" shape-rendering="crispEdges"/><rect x="183" y="663" width="1" height="11" fill="#808080" shape-rendering="crispEdges"/><rect x="190" y="663" width="1" height="11" fill="#808080" shape-rendering="crispEdges"/><rect x="197" y="663" width="1" height="11" fill="#808080" shape-rendering="crispEdges"/><rect x="204" y="663" width="1" height="11" fill="#808080" shape-rendering="crispEdges"/><rect x="211" y="663" width="1" height="11" fill="#808080" shape-rendering="crispEdges"/><rect x="218" y="663" width="1" height="11" fill="#808080" shape-rendering="crispEdges"/><rect x="225" y="663" width="1" height="11" fill="#808080" shape-rendering="crispEdges"/><rect x="232" y="663" width="1" height="25" fill="#808080" shape-rendering="crispEdges"/><rect x="239" y="663" width="1" height="11" fill="#808080" shape-rendering="crispEdges"/><rect x="246" y="663" width="1" height="11" fill="#808080" shape-rendering="crispEdges"/><rect x="253" y="663" width="1" height="11" fill="#808080" shape-rendering="crispEdges"/><rect x="259" y="663" width="1" height="11" fill="#808080" shape-rendering="crispEdges"/><rect x="266" y="663" width="1" height="11" fill="#808080" shape-rendering="crispEdges"/><rect x="273" y="663" width="1" height="11" fill="#808080" shape-rendering="crispEdges"/><rect x="280" y="663" width="1" height="11" fill="#808080" shape-rendering="crispEdges"/><rect x="287" y="663" width="1" height="11" fill="#808080" shape-rendering="crispEdges"/><rect x="294" y="663" width="1" height="11" fill="#808080" shape-rendering="crispEdges"/><rect x="301" y="663" width="1" height="25" fill="#808080" shape-rendering="crispEdges"/><rect x="308" y="663" width="1" height="11" fill="#808080" shape-rendering="crispEdges"/><rect x="315" y="663" width="1" height="11" fill="#808080" shape-rendering="crispEdges"/><rect x="322" y="663" width="1" height="11" fill="#808080" shape-rendering="crispEdges"/><rect x="329" y="663" width="1" height="11" fill="#808080" shape-rendering="crispEdges"/><rect x="336" y="663" width="1" height="11" fill="#808080" shape-rendering="crispEdges"/><rect x="343" y="663" width="1" height="11" fill="#808080" shape-rendering="crispEdges"/><rect x="350" y="663" width="1" height="11" fill="#808080" shape-rendering="crispEdges"/><rect x="357" y="663" width="1" height="11" fill="#808080" shape-rendering="crispEdges"/><rect x="364" y="663" width="1" height="11" fill="#808080" shape-rendering="crispEdges"/><rect x="371" y="663" width="1" height="25" fill="#808080" shape-rendering="crispEdges"/><rect x="378" y="663" width="1" height="11" fill="#808080" shape-rendering="crispEdges"/><rect x="384" y="663" width="1" height="11" fill="#808080" shape-rendering="crispEdges"/><rect x="391" y="663" width="1" height="11" fill="#808080" shape-rendering="crispEdges"/><rect x="398" y="663" width="1" height="11" fill="#808080" shape-rendering="crispEdges"/><rect x="405" y="663" width="1" height="11" fill="#808080" shape-rendering="crispEdges"/><rect x="412" y="663" width="1" height="11" fill="#808080" shape-rendering="crispEdges"/><rect x="419" y="663" width="1" height="11" fill="#808080" shape-rendering="crispEdges"/><rect x="426" y="663" width="1" height="11" fill="#808080" shape-rendering="crispEdges"/><rect x="433" y="663" width="1" height="11" fill="#808080" shape-rendering="crispEdges"/><rect x="440" y="663" width="1" height="25" fill="#808080" shape-rendering="crispEdges"/><rect x="447" y="663" width="1" height="11" fill="#808080" shape-rendering="crispEdges"/><rect x="454" y="663" width="1" height="11" fill="#808080" shape-rendering="crispEdges"/><rect x="461" y="663" width="1" height="11" fill="#808080" shape-rendering="crispEdges"/><rect x="468" y="663" width="1" height="11" fill="#808080" shape-rendering="crispEdges"/><rect x="475" y="663" width="1" height="11" fill="#808080" shape-rendering="crispEdges"/><rect x="482" y="663" width="1" height="11" fill="#808080" shape-rendering="crispEdges"/><rect x="489" y="663" width="1" height="11" fill="#808080" shape-rendering="crispEdges"/><rect x="496" y="663" width="1" height="11" fill="#808080" shape-rendering="crispEdges"/><rect x="503" y="663" width="1" height="11" fill="#808080" shape-rendering="crispEdges"/><rect x="510" y="663" width="1" height="25" fill="#808080" shape-rendering="crispEdges"/><rect x="516" y="663" width="1" height="11" fill="#808080" shape-rendering="crispEdges"/><rect x="523" y="663" width="1" height="11" fill="#808080" shape-rendering="crispEdges"/><rect x="530" y="663" width="1" height="11" fill="#808080" shape-rendering="crispEdges"/><rect x="537" y="663" width="1" height="11" fill="#808080" shape-rendering="crispEdges"/><rect x="544" y="663" width="1" height="11" fill="#808080" shape-rendering="crispEdges"/><rect x="551" y="663" width="1" height="11" fill="#808080" shape-rendering="crispEdges"/><rect x="558" y="663" width="1" height="11" fill="#808080" shape-rendering="crispEdges"/><rect x="565" y="663" width="1" height="11" fill="#808080" shape-rendering="crispEdges"/><rect x="572" y="663" width="1" height="11" fill="#808080" shape-rendering="crispEdges"/><rect x="579" y="663" width="1" height="25" fill="#808080" shape-rendering="crispEdges"/><rect x="586" y="663" width="1" height="11" fill="#808080" shape-rendering="crispEdges"/><rect x="593" y="663" width="1" height="11" fill="#808080" shape-rendering="crispEdges"/><rect x="600" y="663" width="1" height="11" fill="#808080" shape-rendering="crispEdges"/><rect x="607" y="663" width="1" height="11" fill="#808080" shape-rendering="crispEdges"/><rect x="614" y="663" width="1" height="11" fill="#808080" shape-rendering="crispEdges"/><rect x="621" y="663" width="1" height="11" fill="#808080" shape-rendering="crispEdges"/><rect x="628" y="663" width="1" height="11" fill="#808080" shape-rendering="crispEdges"/><rect x="635" y="663" width="1" height="11" fill="#808080" shape-rendering="crispEdges"/><rect x="641" y="663" width="1" height="11" fill="#808080" shape-rendering="crispEdges"/><rect x="648" y="663" width="1" height="25" fill="#808080" shape-rendering="crispEdges"/><rect x="655" y="663" width="1" height="11" fill="#808080" shape-rendering="crispEdges"/><rect x="662" y="663" width="1" height="11" fill="#808080" shape-rendering="crispEdges"/><rect x="669" y="663" width="1" height="11" fill="#808080" shape-rendering="crispEdges"/><rect x="676" y="663" width="1" height="11" fill="#808080" shape-rendering="crispEdges"/><rect x="683" y="663" width="1" height="11" fill="#808080" shape-rendering="crispEdges"/><rect x="690" y="663" width="1" height="11" fill="#808080" shape-rendering="crispEdges"/><rect x="697" y="663" width="1" height="11" fill="#808080" shape-rendering="crispEdges"/><rect x="704" y="663" width="1" height="11" fill="#808080" shape-rendering="crispEdges"/><rect x="711" y="663" width="1" height="11" fill="#808080" shape-rendering="crispEdges"/><rect x="718" y="663" width="1" height="25" fill="#808080" shape-rendering="crispEdges"/><rect x="725" y="663" width="1" height="11" fill="#808080" shape-rendering="crispEdges"/><rect x="732" y="663" width="1" height="11" fill="#808080" shape-rendering="crispEdges"/><rect x="739" y="663" width="1" height="11" fill="#808080" shape-rendering="crispEdges"/><rect x="746" y="663" width="1" height="11" fill="#808080" shape-rendering="crispEdges"/><rect x="753" y="663" width="1" height="11" fill="#808080" shape-rendering="crispEdges"/><rect x="760" y="663" width="1" height="11" fill="#808080" shape-rendering="crispEdges"/><rect x="766" y="663" width="1" height="11" fill="#808080" shape-rendering="crispEdges"/><rect x="773" y="663" width="1" height="11" fill="#808080" shape-rendering="crispEdges"/><rect x="780" y="663" width="1" height="11" fill="#808080" shape-rendering="crispEdges"/><rect x="787" y="663" width="1" height="25" fill="#808080" shape-rendering="crispEdges"/><text x="91.0" y="685" font-size="12" fill="#102040" stroke="#102040" stroke-width="0.15" textLength="5.5" lengthAdjust="spacingAndGlyphs" >0</text><text x="157.5" y="685" font-size="12" fill="#000" stroke="#000" stroke-width="0.15" textLength="11.5" lengthAdjust="spacingAndGlyphs" >10</text><text x="226.9" y="685" font-size="12" fill="#000" stroke="#000" stroke-width="0.15" textLength="11.5" lengthAdjust="spacingAndGlyphs" >20</text><text x="296.4" y="685" font-size="12" fill="#000" stroke="#000" stroke-width="0.15" textLength="11.5" lengthAdjust="spacingAndGlyphs" >30</text><text x="365.9" y="685" font-size="12" fill="#000" stroke="#000" stroke-width="0.15" textLength="11.5" lengthAdjust="spacingAndGlyphs" >40</text><text x="435.3" y="685" font-size="12" fill="#000" stroke="#000" stroke-width="0.15" textLength="11.5" lengthAdjust="spacingAndGlyphs" >50</text><text x="504.8" y="685" font-size="12" fill="#000" stroke="#000" stroke-width="0.15" textLength="11.5" lengthAdjust="spacingAndGlyphs" >60</text><text x="574.2" y="685" font-size="12" fill="#000" stroke="#000" stroke-width="0.15" textLength="11.5" lengthAdjust="spacingAndGlyphs" >70</text><text x="643.6" y="685" font-size="12" fill="#000" stroke="#000" stroke-width="0.15" textLength="11.5" lengthAdjust="spacingAndGlyphs" >80</text><text x="713.1" y="685" font-size="12" fill="#000" stroke="#000" stroke-width="0.15" textLength="11.5" lengthAdjust="spacingAndGlyphs" >90</text><text x="779.5" y="685" font-size="12" fill="#000" stroke="#000" stroke-width="0.15" textLength="17.5" lengthAdjust="spacingAndGlyphs" >100</text><rect x="40" y="687" width="749" height="1" fill="#e4e4e4" shape-rendering="crispEdges"/><rect x="1" y="690" width="298" height="23" fill="#ffffff" shape-rendering="crispEdges"/><rect x="1" y="690" width="297" height="22" fill="#f1efe2" shape-rendering="crispEdges"/><rect x="1" y="690" width="296" height="21" fill="#aca899" shape-rendering="crispEdges"/><rect x="2" y="691" width="295" height="20" fill="#716f64" shape-rendering="crispEdges"/><rect x="3" y="692" width="294" height="19" fill="#dcc3c3" shape-rendering="crispEdges"/><rect x="1" y="713" width="298" height="23" fill="#ffffff" shape-rendering="crispEdges"/><rect x="1" y="713" width="297" height="22" fill="#f1efe2" shape-rendering="crispEdges"/><rect x="1" y="713" width="296" height="21" fill="#aca899" shape-rendering="crispEdges"/><rect x="2" y="714" width="295" height="20" fill="#716f64" shape-rendering="crispEdges"/><rect x="3" y="715" width="294" height="19" fill="#ffffff" shape-rendering="crispEdges"/><rect x="301" y="690" width="1" height="48" fill="#f4f4f4" shape-rendering="crispEdges"/><rect x="304" y="690" width="1" height="48" fill="#808080" shape-rendering="crispEdges"/><path d="M315.5 700 V698 A2.5 2.8 0 0 1 320.5 698 V700" fill="none" stroke="#000" stroke-width="1.1"/><rect x="314" y="700" width="8" height="7" fill="#000" shape-rendering="crispEdges"/><rect x="315" y="702" width="6" height="1" fill="#c5c5c5" shape-rendering="crispEdges"/><rect x="315" y="704" width="6" height="1" fill="#c5c5c5" shape-rendering="crispEdges"/><rect x="338.5" y="694.5" width="14" height="14" fill="none" stroke="#000" stroke-width="1.2"/><path d="M345.5 695 V708 M339 701.5 H352" stroke="#000" stroke-width="0.8"/><circle cx="345.5" cy="701.5" r="2" fill="#505050" stroke="#000" stroke-width="0.8"/><text x="360.5" y="707" font-size="12" fill="#000" stroke="#000" stroke-width="0.15" textLength="10" lengthAdjust="spacingAndGlyphs" >X:</text><rect x="371" y="693" width="58" height="19" fill="#f8f8f8" shape-rendering="crispEdges"/><rect x="371" y="693" width="57" height="18" fill="#000000" shape-rendering="crispEdges"/><rect x="373" y="695" width="55" height="16" fill="#e0e0e0" shape-rendering="crispEdges"/><rect x="372" y="694" width="56" height="1" fill="#505050" shape-rendering="crispEdges"/><rect x="373" y="710" width="55" height="1" fill="#d4d4d4" shape-rendering="crispEdges"/><rect x="427" y="695" width="1" height="16" fill="#d4d4d4" shape-rendering="crispEdges"/><clipPath id="cpx"><rect x="373" y="695" width="54" height="15"/></clipPath><g clip-path="url(#cpx)"><text x="374.5" y="706.5" font-size="12" fill="#808080" stroke="#808080" stroke-width="0.15" textLength="53.5" lengthAdjust="spacingAndGlyphs" >-12391,257</text></g><text x="442.5" y="707" font-size="12" fill="#000" stroke="#000" stroke-width="0.15" textLength="10" lengthAdjust="spacingAndGlyphs" >Y:</text><rect x="453" y="693" width="57" height="19" fill="#f8f8f8" shape-rendering="crispEdges"/><rect x="453" y="693" width="56" height="18" fill="#000000" shape-rendering="crispEdges"/><rect x="455" y="695" width="54" height="16" fill="#e0e0e0" shape-rendering="crispEdges"/><rect x="454" y="694" width="55" height="1" fill="#505050" shape-rendering="crispEdges"/><rect x="455" y="710" width="54" height="1" fill="#d4d4d4" shape-rendering="crispEdges"/><rect x="508" y="695" width="1" height="16" fill="#d4d4d4" shape-rendering="crispEdges"/><clipPath id="cpy"><rect x="455" y="695" width="53" height="15"/></clipPath><g clip-path="url(#cpy)"><text x="456.5" y="706.5" font-size="12" fill="#808080" stroke="#808080" stroke-width="0.15" textLength="53" lengthAdjust="spacingAndGlyphs" >-2379,126c</text></g><text x="524.5" y="707" font-size="12" fill="#000" stroke="#000" stroke-width="0.15" textLength="9.5" lengthAdjust="spacingAndGlyphs" >Z:</text><rect x="536" y="693" width="45" height="19" fill="#f8f8f8" shape-rendering="crispEdges"/><rect x="536" y="693" width="44" height="18" fill="#000000" shape-rendering="crispEdges"/><rect x="538" y="695" width="42" height="16" fill="#e0e0e0" shape-rendering="crispEdges"/><rect x="537" y="694" width="43" height="1" fill="#505050" shape-rendering="crispEdges"/><rect x="538" y="710" width="42" height="1" fill="#d4d4d4" shape-rendering="crispEdges"/><rect x="579" y="695" width="1" height="16" fill="#d4d4d4" shape-rendering="crispEdges"/><text x="539.5" y="706.5" font-size="12" fill="#808080" stroke="#808080" stroke-width="0.15" textLength="29" lengthAdjust="spacingAndGlyphs" >0,0cm</text><rect x="307" y="717" width="172" height="21" fill="#f0f0f0" shape-rendering="crispEdges"/><rect x="307" y="717" width="171" height="21" fill="#808080" shape-rendering="crispEdges"/><rect x="308" y="718" width="170" height="20" fill="#c5c5c5" shape-rendering="crispEdges"/><rect x="481" y="717" width="100" height="21" fill="#f0f0f0" shape-rendering="crispEdges"/><rect x="481" y="717" width="99" height="21" fill="#808080" shape-rendering="crispEdges"/><rect x="482" y="718" width="98" height="20" fill="#c5c5c5" shape-rendering="crispEdges"/><clipPath id="cp1"><rect x="308" y="718" width="169" height="17"/></clipPath><g clip-path="url(#cp1)"><text x="313.5" y="731.5" font-size="12" fill="#000" stroke="#000" stroke-width="0.15" textLength="164" lengthAdjust="spacingAndGlyphs" >Click or click-and-drag to select obj</text></g><text x="487" y="731.5" font-size="12" fill="#000" stroke="#000" stroke-width="0.15" textLength="67" lengthAdjust="spacingAndGlyphs" >Add Time Tag</text><rect x="583" y="691" width="43" height="44" fill="#c5c5c5" shape-rendering="crispEdges"/><rect x="583" y="691" width="43" height="1" fill="#ececec" shape-rendering="crispEdges"/><rect x="583" y="691" width="1" height="44" fill="#ececec" shape-rendering="crispEdges"/><rect x="583" y="734" width="43" height="1" fill="#6e6e6e" shape-rendering="crispEdges"/><rect x="625" y="691" width="1" height="44" fill="#6e6e6e" shape-rendering="crispEdges"/><ellipse cx="596" cy="712.5" rx="3.4" ry="4.2" fill="none" stroke="#000" stroke-width="2"/><rect x="600" y="711" width="16" height="3" fill="#000" shape-rendering="crispEdges"/><rect x="609" y="714" width="2" height="3" fill="#000" shape-rendering="crispEdges"/><rect x="612" y="714" width="2" height="2" fill="#000" shape-rendering="crispEdges"/><rect x="630" y="691" width="47" height="22" fill="#c5c5c5" shape-rendering="crispEdges"/><rect x="630" y="691" width="47" height="1" fill="#ececec" shape-rendering="crispEdges"/><rect x="630" y="691" width="1" height="22" fill="#ececec" shape-rendering="crispEdges"/><rect x="630" y="712" width="47" height="1" fill="#6e6e6e" shape-rendering="crispEdges"/><rect x="676" y="691" width="1" height="22" fill="#6e6e6e" shape-rendering="crispEdges"/><text x="631.6" y="707" font-size="12" fill="#000" stroke="#000" stroke-width="0.15" textLength="43.8" lengthAdjust="spacingAndGlyphs" >Auto Key</text><rect x="630" y="714" width="47" height="21" fill="#c5c5c5" shape-rendering="crispEdges"/><rect x="630" y="714" width="47" height="1" fill="#ececec" shape-rendering="crispEdges"/><rect x="630" y="714" width="1" height="21" fill="#ececec" shape-rendering="crispEdges"/><rect x="630" y="734" width="47" height="1" fill="#6e6e6e" shape-rendering="crispEdges"/><rect x="676" y="714" width="1" height="21" fill="#6e6e6e" shape-rendering="crispEdges"/><text x="634.6" y="729" font-size="12" fill="#000" stroke="#000" stroke-width="0.15" textLength="37.8" lengthAdjust="spacingAndGlyphs" >Set Key</text><rect x="680" y="691" width="115" height="22" fill="#f8f8f8" shape-rendering="crispEdges"/><rect x="680" y="691" width="114" height="21" fill="#5c6670" shape-rendering="crispEdges"/><rect x="682" y="693" width="112" height="19" fill="#e0e0e0" shape-rendering="crispEdges"/><rect x="681" y="692" width="113" height="1" fill="#5c6670" shape-rendering="crispEdges"/><rect x="682" y="711" width="112" height="1" fill="#d4d4d4" shape-rendering="crispEdges"/><rect x="793" y="693" width="1" height="19" fill="#d4d4d4" shape-rendering="crispEdges"/><text x="685" y="706" font-size="12" fill="#000" stroke="#000" stroke-width="0.15" textLength="42" lengthAdjust="spacingAndGlyphs" >Selected</text><rect x="777" y="693" width="17" height="17" fill="#ece9d8" shape-rendering="crispEdges"/><rect x="777" y="693" width="17" height="1" fill="#ffffff" shape-rendering="crispEdges"/><rect x="777" y="693" width="1" height="17" fill="#ffffff" shape-rendering="crispEdges"/><rect x="777" y="709" width="17" height="1" fill="#716f64" shape-rendering="crispEdges"/><rect x="793" y="693" width="1" height="17" fill="#716f64" shape-rendering="crispEdges"/><rect x="778" y="708" width="15" height="1" fill="#aca899" shape-rendering="crispEdges"/><rect x="792" y="694" width="1" height="15" fill="#aca899" shape-rendering="crispEdges"/><rect x="782" y="700" width="7" height="1" fill="#000" shape-rendering="crispEdges"/><rect x="783" y="701" width="5" height="1" fill="#000" shape-rendering="crispEdges"/><rect x="784" y="702" width="3" height="1" fill="#000" shape-rendering="crispEdges"/><rect x="785" y="703" width="1" height="1" fill="#000" shape-rendering="crispEdges"/><rect x="680" y="714" width="116" height="21" fill="#c5c5c5" shape-rendering="crispEdges"/><rect x="680" y="714" width="116" height="1" fill="#ececec" shape-rendering="crispEdges"/><rect x="680" y="714" width="1" height="21" fill="#ececec" shape-rendering="crispEdges"/><rect x="680" y="734" width="116" height="1" fill="#6e6e6e" shape-rendering="crispEdges"/><rect x="795" y="714" width="1" height="21" fill="#6e6e6e" shape-rendering="crispEdges"/><text x="708.0" y="729" font-size="12" fill="#000" stroke="#000" stroke-width="0.15" textLength="60.0" lengthAdjust="spacingAndGlyphs" >Key Filters...</text><rect x="804" y="697" width="2" height="9" fill="#000" shape-rendering="crispEdges"/><path d="M813 697 V706 L806 701.5 Z" fill="#000"/><path d="M820 697 V706 L813 701.5 Z" fill="#000"/><rect x="825" y="694" width="1" height="16" fill="#808080" shape-rendering="crispEdges"/><rect x="826" y="694" width="1" height="16" fill="#e8e8e8" shape-rendering="crispEdges"/><path d="M838 697 V706 L832 701.5 Z" fill="#000"/><rect x="839" y="697" width="2" height="9" fill="#000" shape-rendering="crispEdges"/><rect x="842" y="697" width="2" height="9" fill="#000" shape-rendering="crispEdges"/><rect x="854" y="695" width="15" height="13" fill="#c5c5c5" stroke="#000" stroke-width="2"/><path d="M858 697 V706 L865 701.5 Z" fill="#000"/><path d="M871 706 v4 h-4 z" fill="#000"/><path d="M866.5 709.5 L870.5 705.5" stroke="#fff" stroke-width="1"/><rect x="877" y="697" width="2" height="9" fill="#000" shape-rendering="crispEdges"/><rect x="880" y="697" width="2" height="9" fill="#000" shape-rendering="crispEdges"/><path d="M883 697 V706 L889 701.5 Z" fill="#000"/><rect x="897" y="694" width="1" height="16" fill="#808080" shape-rendering="crispEdges"/><rect x="898" y="694" width="1" height="16" fill="#e8e8e8" shape-rendering="crispEdges"/><path d="M902 697 V706 L909 701.5 Z" fill="#000"/><path d="M909 697 V706 L916 701.5 Z" fill="#000"/><rect x="916" y="697" width="2" height="9" fill="#000" shape-rendering="crispEdges"/><rect x="926" y="694" width="1" height="16" fill="#808080" shape-rendering="crispEdges"/><rect x="927" y="694" width="1" height="16" fill="#e8e8e8" shape-rendering="crispEdges"/><rect x="807" y="719" width="1" height="8" fill="#000" shape-rendering="crispEdges"/><rect x="818" y="719" width="1" height="8" fill="#000" shape-rendering="crispEdges"/><path d="M813 719 V727 L808 723.0 Z" fill="#000"/><path d="M813 719 V727 L818 723.0 Z" fill="#000"/><rect x="809" y="722" width="8" height="2" fill="#000" shape-rendering="crispEdges"/><rect x="825" y="716" width="1" height="16" fill="#808080" shape-rendering="crispEdges"/><rect x="826" y="716" width="1" height="16" fill="#e8e8e8" shape-rendering="crispEdges"/><rect x="828" y="715" width="66" height="19" fill="#f8f8f8" shape-rendering="crispEdges"/><rect x="828" y="715" width="65" height="18" fill="#000000" shape-rendering="crispEdges"/><rect x="830" y="717" width="63" height="16" fill="#e0e0e0" shape-rendering="crispEdges"/><rect x="829" y="716" width="64" height="1" fill="#505050" shape-rendering="crispEdges"/><rect x="830" y="732" width="63" height="1" fill="#d4d4d4" shape-rendering="crispEdges"/><rect x="892" y="717" width="1" height="16" fill="#d4d4d4" shape-rendering="crispEdges"/><text x="832" y="728.5" font-size="12" fill="#000" stroke="#000" stroke-width="0.15" textLength="6.0" lengthAdjust="spacingAndGlyphs" >0</text><rect x="897" y="716" width="1" height="16" fill="#808080" shape-rendering="crispEdges"/><rect x="898" y="716" width="1" height="16" fill="#e8e8e8" shape-rendering="crispEdges"/><rect x="903.5" y="717.5" width="9" height="10" fill="#d8d8d8" stroke="#000" stroke-width="1.2"/><rect x="903" y="717" width="10" height="2" fill="#000" shape-rendering="crispEdges"/><circle cx="911.5" cy="724.5" r="4" fill="none" stroke="#b02020" stroke-width="1"/><path d="M911.5 721.5 V726 M909.5 724.5 L911.5 726.5 L913.5 724.5" stroke="#000" stroke-width="0.9" fill="none"/><rect x="926" y="716" width="1" height="16" fill="#808080" shape-rendering="crispEdges"/><rect x="927" y="716" width="1" height="16" fill="#e8e8e8" shape-rendering="crispEdges"/><circle cx="936.5" cy="699" r="4.6" fill="#e8e8f0" stroke="#2020a0" stroke-width="1.2"/><path d="M940 702.5 L945.5 708" stroke="#101060" stroke-width="2"/><path d="M940.5 702 L946 707.5" stroke="#4060e0" stroke-width="0.8"/><path d="M957.5 694.5 H970 V705 H957.5 Z M963.5 694.5 V705 M957.5 699.5 H970" fill="none" stroke="#a02020" stroke-width="1.1"/><circle cx="958.5" cy="702.5" r="3.4" fill="#e8e8f0" stroke="#2020a0" stroke-width="1"/><path d="M961 705 L965 709" stroke="#2030a0" stroke-width="1.6"/><path d="M977.5 697 V694.5 H980 M990 694.5 H992.5 V697 M977.5 706 V708.5 H980 M990 708.5 H992.5 V706" fill="none" stroke="#000" stroke-width="1.2"/><path d="M979.5 698.5 H988 V706.5 H979.5 Z" fill="#d8d8d8" stroke="#2020a0" stroke-width="1.1"/><path d="M979.5 698.5 L982 695.5 H990.5 L988 698.5 M990.5 695.5 V704 L988 706.5" fill="#fff" stroke="#2020a0" stroke-width="1"/><path d="M988 698.5 L990.5 695.5 V704 L988 706.5 Z" fill="#8080a0"/><path d="M994 706 V710 H990 Z" fill="#000"/><path d="M989.5 709.5 L993.5 705.5" stroke="#fff" stroke-width="1"/><path d="M1003.5 694.5 H1015.5 V704 H1003.5 Z M1009.5 694.5 V704 M1003.5 699 H1015.5" fill="none" stroke="#a02020" stroke-width="1.1"/><path d="M1000.5 701.5 H1007.5 V708.5 H1000.5 Z" fill="#d8d8d8" stroke="#2020a0" stroke-width="1.1"/><path d="M1000.5 701.5 L1002.5 699.5 H1009.5 L1007.5 701.5 M1009.5 699.5 V706.5 L1007.5 708.5" fill="#f0f0f0" stroke="#2020a0" stroke-width="1"/><path d="M1017 706 V710 H1013 Z" fill="#000"/><path d="M1012.5 709.5 L1016.5 705.5" stroke="#fff" stroke-width="1"/><path d="M931.5 716.5 L946 724 L931.5 731 Z" fill="#e0e0e0" stroke="#000" stroke-width="1.5"/><path d="M931.5 717 L937 719.5 Q935 724 937 728.5 L931.5 731" fill="#909090"/><path d="M937.5 719.5 Q935 724 937.5 728.5" fill="none" stroke="#000" stroke-width="1.2"/><path d="M948 728 V732 H944 Z" fill="#000"/><path d="M943.5 731.5 L947.5 727.5" stroke="#fff" stroke-width="1"/><path d="M958 731 L955 725 Q954 722 956.5 723 L958 725 V718.5 Q959 716.5 960.2 718.5 V717.5 Q961.4 715.5 962.6 717.5 V718 Q963.8 716.5 965 718.5 V720 Q966.5 718.5 967.5 720.5 V727 L966 731 Z" fill="#f4f4f4" stroke="#000" stroke-width="1"/><circle cx="984" cy="724.5" r="4.8" fill="none" stroke="#000" stroke-width="1.1"/><path d="M984 724.5 V717 M984 724.5 H992 M984 724.5 L978 730.5" stroke="#2020a0" stroke-width="1.1" fill="none"/><path d="M984 715.5 L982 718.5 H986 Z M993.5 724.5 L990.5 722.5 V726.5 Z M977 731.5 L977.5 728 L980.5 731 Z" fill="#000"/><path d="M994 728 V732 H990 Z" fill="#000"/><path d="M989.5 731.5 L993.5 727.5" stroke="#fff" stroke-width="1"/><rect x="1001.5" y="716.5" width="11" height="11" fill="none" stroke="#2020a0" stroke-width="1.3"/><path d="M1008.5 728 V731.5 H1015.5 V724.5 H1013" fill="none" stroke="#000" stroke-width="1.2"/><path d="M1004.5 719.5 L1009.5 724.5 M1004.5 722.5 V719.5 H1007.5" fill="none" stroke="#000" stroke-width="1"/></svg>
<div class="a" id="taskbar" style="left:0;top:738px;width:1024px;height:30px;background:linear-gradient(to bottom,#3168d5 0,#4993e6 2px,#2b71e8 4px,#2663e0 6px,#245edb 10px,#245edb 24px,#2058d0 27px,#1941a5 30px)"></div><svg class="a" style="left:0;top:0" width="1024" height="768" viewBox="0 0 1024 768" font-family="Liberation Sans" ><defs>
<linearGradient id="gstart" x1="0" y1="0" x2="0" y2="1"><stop offset="0" stop-color="#58a858"/><stop offset="0.1" stop-color="#3f9a3f"/><stop offset="0.5" stop-color="#3c953c"/><stop offset="0.85" stop-color="#2f832f"/><stop offset="1" stop-color="#256a25"/></linearGradient>
<radialGradient id="gstart2" cx="0.5" cy="0.45" r="0.6"><stop offset="0" stop-color="#48a848" stop-opacity="0.9"/><stop offset="1" stop-color="#48a848" stop-opacity="0"/></radialGradient>
<linearGradient id="gtb" x1="0" y1="0" x2="0" y2="1"><stop offset="0" stop-color="#5a98f8"/><stop offset="0.12" stop-color="#3f84f4"/><stop offset="0.85" stop-color="#3a7cee"/><stop offset="1" stop-color="#2c68d8"/></linearGradient>
<linearGradient id="gtba" x1="0" y1="0" x2="0" y2="1"><stop offset="0" stop-color="#173da0"/><stop offset="0.15" stop-color="#1c4ab8"/><stop offset="1" stop-color="#2052c8"/></linearGradient>
<linearGradient id="gtray" x1="0" y1="0" x2="0" y2="1"><stop offset="0" stop-color="#0c5fcb"/><stop offset="0.1" stop-color="#19b9f3"/><stop offset="0.2" stop-color="#1197e8"/><stop offset="0.5" stop-color="#0f8fe6"/><stop offset="0.9" stop-color="#0f86de"/><stop offset="1" stop-color="#0a60c0"/></linearGradient>
<radialGradient id="gchev" cx="0.4" cy="0.35" r="0.7"><stop offset="0" stop-color="#6fc0ff"/><stop offset="0.6" stop-color="#1c78e0"/><stop offset="1" stop-color="#0c4cb8"/></radialGradient>
</defs><path d="M0 738 H88 Q99 741 99 753 Q99 765 90 768 H0 Z" fill="url(#gstart)"/><path d="M0 740 H88 Q97 743 97 753 Q97 763 90 766 H0 Z" fill="url(#gstart2)"/><path d="M88 738 Q99 741 99 753 Q99 765 90 768" fill="none" stroke="#1c5a24" stroke-width="1.2" opacity="0.7"/><path d="M12.5 745.5 Q16 743.5 19.5 745.5 L18.5 751.5 Q15 749.8 11.5 751.5 Z" fill="#e8582c"/><path d="M21 746 Q24.5 748 28.5 746 L27.5 752 Q24 754 20 752 Z" fill="#7cc040"/><path d="M11.2 753 Q14.7 751.3 18.2 753 L17.2 759 Q13.7 757.3 10.2 759 Z" fill="#4a80e0"/><path d="M19.7 753.5 Q23.2 755.5 27.2 753.5 L26.2 759.5 Q22.7 761.5 18.7 759.5 Z" fill="#f0c030"/><text x="36" y="760" font-size="16" fill="#1c4c1c" stroke="#1c4c1c" stroke-width="0.15" font-weight="bold" textLength="39" lengthAdjust="spacingAndGlyphs" font-style="italic">Start</text><text x="35" y="759" font-size="16" fill="#fff" stroke="#fff" stroke-width="0.15" font-weight="bold" textLength="39" lengthAdjust="spacingAndGlyphs" font-style="italic">Start</text><rect x="109" y="742" width="154" height="23" rx="2.5" fill="url(#gtb)"/><path d="M109.5 764 V744 Q109.5 742.5 111.5 742.5 H260" fill="none" stroke="#6aa4ff" stroke-width="1" opacity="0.6"/><path d="M262.5 744 V763 Q262.5 764.5 260.5 764.5 H111" fill="none" stroke="#1c48b0" stroke-width="1" opacity="0.7"/><path d="M123.5 746.5 H130.5 L133.5 749.5 V760.5 H123.5 Z" fill="#ffffff" stroke="#404040" stroke-width="1"/><rect x="125" y="760" width="10" height="1" fill="#000" shape-rendering="crispEdges"/><rect x="134" y="750" width="1" height="11" fill="#000" shape-rendering="crispEdges"/><rect x="118" y="747" width="11" height="10" fill="#1a2aa0" shape-rendering="crispEdges"/><path d="M120 749.5 L121.7 754.5 L123.5 750.5 L125.3 754.5 L127 749.5" fill="none" stroke="#fff" stroke-width="1.2"/><text x="138" y="757" font-size="11" fill="#fff" stroke="#fff" stroke-width="0.15" textLength="110" lengthAdjust="spacingAndGlyphs" >Map Tutorial - Micros...</text><rect x="264" y="742" width="154" height="23" rx="2.5" fill="url(#gtb)"/><path d="M264.5 764 V744 Q264.5 742.5 266.5 742.5 H415" fill="none" stroke="#6aa4ff" stroke-width="1" opacity="0.6"/><path d="M417.5 744 V763 Q417.5 764.5 415.5 764.5 H266" fill="none" stroke="#1c48b0" stroke-width="1" opacity="0.7"/><path d="M278.5 746.5 H285.5 L288.5 749.5 V760.5 H278.5 Z" fill="#ffffff" stroke="#404040" stroke-width="1"/><rect x="280" y="760" width="10" height="1" fill="#000" shape-rendering="crispEdges"/><rect x="289" y="750" width="1" height="11" fill="#000" shape-rendering="crispEdges"/><rect x="273" y="747" width="11" height="10" fill="#1a2aa0" shape-rendering="crispEdges"/><path d="M275 749.5 L276.7 754.5 L278.5 750.5 L280.3 754.5 L282 749.5" fill="none" stroke="#fff" stroke-width="1.2"/><text x="293" y="757" font-size="11" fill="#fff" stroke="#fff" stroke-width="0.15" textLength="109" lengthAdjust="spacingAndGlyphs" >Smilie Liste - Microso...</text><rect x="420" y="742" width="154" height="23" rx="2.5" fill="url(#gtba)"/><path d="M420.5 764 V744 Q420.5 742.5 422.5 742.5 H571" fill="none" stroke="#0c2c80" stroke-width="1" opacity="0.8"/><rect x="431" y="747" width="16" height="13" fill="#000" shape-rendering="crispEdges"/><rect x="432" y="748" width="14" height="11" fill="#fff" shape-rendering="crispEdges"/><path d="M443.5 750.5 H436.5 Q434 750.5 434 753 V754 Q434 756.5 436.5 756.5 H441.5 Q444 756.5 444 754.5 Q444 753 442 753 H438" fill="none" stroke="#111" stroke-width="1.6"/><text x="449" y="757" font-size="11" fill="#fff" stroke="#fff" stroke-width="0.15" textLength="104" lengthAdjust="spacingAndGlyphs" >Untitled - 3ds max 6 ...</text><rect x="576" y="742" width="154" height="23" rx="2.5" fill="url(#gtb)"/><path d="M576.5 764 V744 Q576.5 742.5 578.5 742.5 H727" fill="none" stroke="#6aa4ff" stroke-width="1" opacity="0.6"/><path d="M729.5 744 V763 Q729.5 764.5 727.5 764.5 H578" fill="none" stroke="#1c48b0" stroke-width="1" opacity="0.7"/><path d="M585.5 749.5 Q585.5 747.5 587.5 747.5 H591 L592.5 749 H598 Q599.5 749 599.5 750.5 V758 Q599.5 759.5 598 759.5 H587 Q585.5 759.5 585.5 758 Z" fill="#e8c860" stroke="#9a7a20" stroke-width="1"/><path d="M586.5 752 Q586.5 751 588 751 H598.5 V758 Q598.5 758.5 598 758.5 H587 Q586.5 758.5 586.5 758 Z" fill="#fff0a0"/><text x="605" y="757" font-size="11" fill="#fff" stroke="#fff" stroke-width="0.15" textLength="54" lengthAdjust="spacingAndGlyphs" >Dokumente</text><rect x="732" y="742" width="154" height="23" rx="2.5" fill="url(#gtb)"/><path d="M732.5 764 V744 Q732.5 742.5 734.5 742.5 H883" fill="none" stroke="#6aa4ff" stroke-width="1" opacity="0.6"/><path d="M885.5 744 V763 Q885.5 764.5 883.5 764.5 H734" fill="none" stroke="#1c48b0" stroke-width="1" opacity="0.7"/><path d="M743 753 H753 L751.5 761 Q748 762.5 744.5 761 Z" fill="#d8e0e8" stroke="#8090a0" stroke-width="0.8"/><path d="M745 759 L742.5 747" stroke="#c06020" stroke-width="1.6"/><circle cx="742.5" cy="747" r="1.5" fill="#d04020"/><path d="M747 759 L746 749" stroke="#e8d020" stroke-width="1.6"/><path d="M749 759 L750 749" stroke="#30a040" stroke-width="1.6"/><path d="M750.5 759 L753.5 748" stroke="#e04020" stroke-width="1.6"/><text x="761" y="757" font-size="11" fill="#fff" stroke="#fff" stroke-width="0.15" textLength="87" lengthAdjust="spacingAndGlyphs" >Unbenannt - Paint</text><rect x="896" y="745" width="16" height="16" fill="#3a6cd8" shape-rendering="crispEdges"/><text x="898.5" y="757" font-size="11" fill="#fff" stroke="#fff" stroke-width="0.15" textLength="12" lengthAdjust="spacingAndGlyphs" >DE</text><rect x="932" y="738" width="92" height="30" fill="url(#gtray)" /><rect x="931" y="739" width="1" height="29" fill="#0a3c98" shape-rendering="crispEdges"/><rect x="932" y="739" width="1" height="29" fill="#3cb0f8" shape-rendering="crispEdges"/><circle cx="931.5" cy="753.5" r="8.5" fill="url(#gchev)" stroke="#a8d4ff" stroke-width="0.9"/><path d="M933.5 749.5 L929.5 753.5 L933.5 757.5" fill="none" stroke="#fff" stroke-width="2"/><rect x="942" y="745" width="16" height="16" fill="#000" shape-rendering="crispEdges"/><rect x="943" y="746" width="14" height="8" fill="#203060" shape-rendering="crispEdges"/><path d="M945 747 L949 752 M955 747 L951 752 M950 746 V751" stroke="#fff" stroke-width="1.3"/><rect x="949" y="752" width="2" height="2" fill="#f0e020" shape-rendering="crispEdges"/><text x="943.5" y="760" font-size="6.5" fill="#fff" stroke="#fff" stroke-width="0.15" font-weight="bold" textLength="13" lengthAdjust="spacingAndGlyphs" >LITE</text><circle cx="970" cy="749" r="3.2" fill="#3a9048"/><path d="M965 761 Q965 753 970 753 Q975.5 753 975.5 761 Z" fill="#48a058"/><circle cx="964" cy="751" r="2.4" fill="#88b8e8"/><path d="M960.5 760 Q960.5 754 964 754 Q967.5 754 967.5 760 Z" fill="#a0c8f0"/><circle cx="972.5" cy="757.5" r="3.8" fill="#e02020"/><path d="M970.8 755.8 L974.2 759.2 M974.2 755.8 L970.8 759.2" stroke="#fff" stroke-width="1.2"/><text x="983" y="757" font-size="11" fill="#fff" stroke="#fff" stroke-width="0.15" textLength="27" lengthAdjust="spacingAndGlyphs" >23:24</text></svg>
</body></html>
